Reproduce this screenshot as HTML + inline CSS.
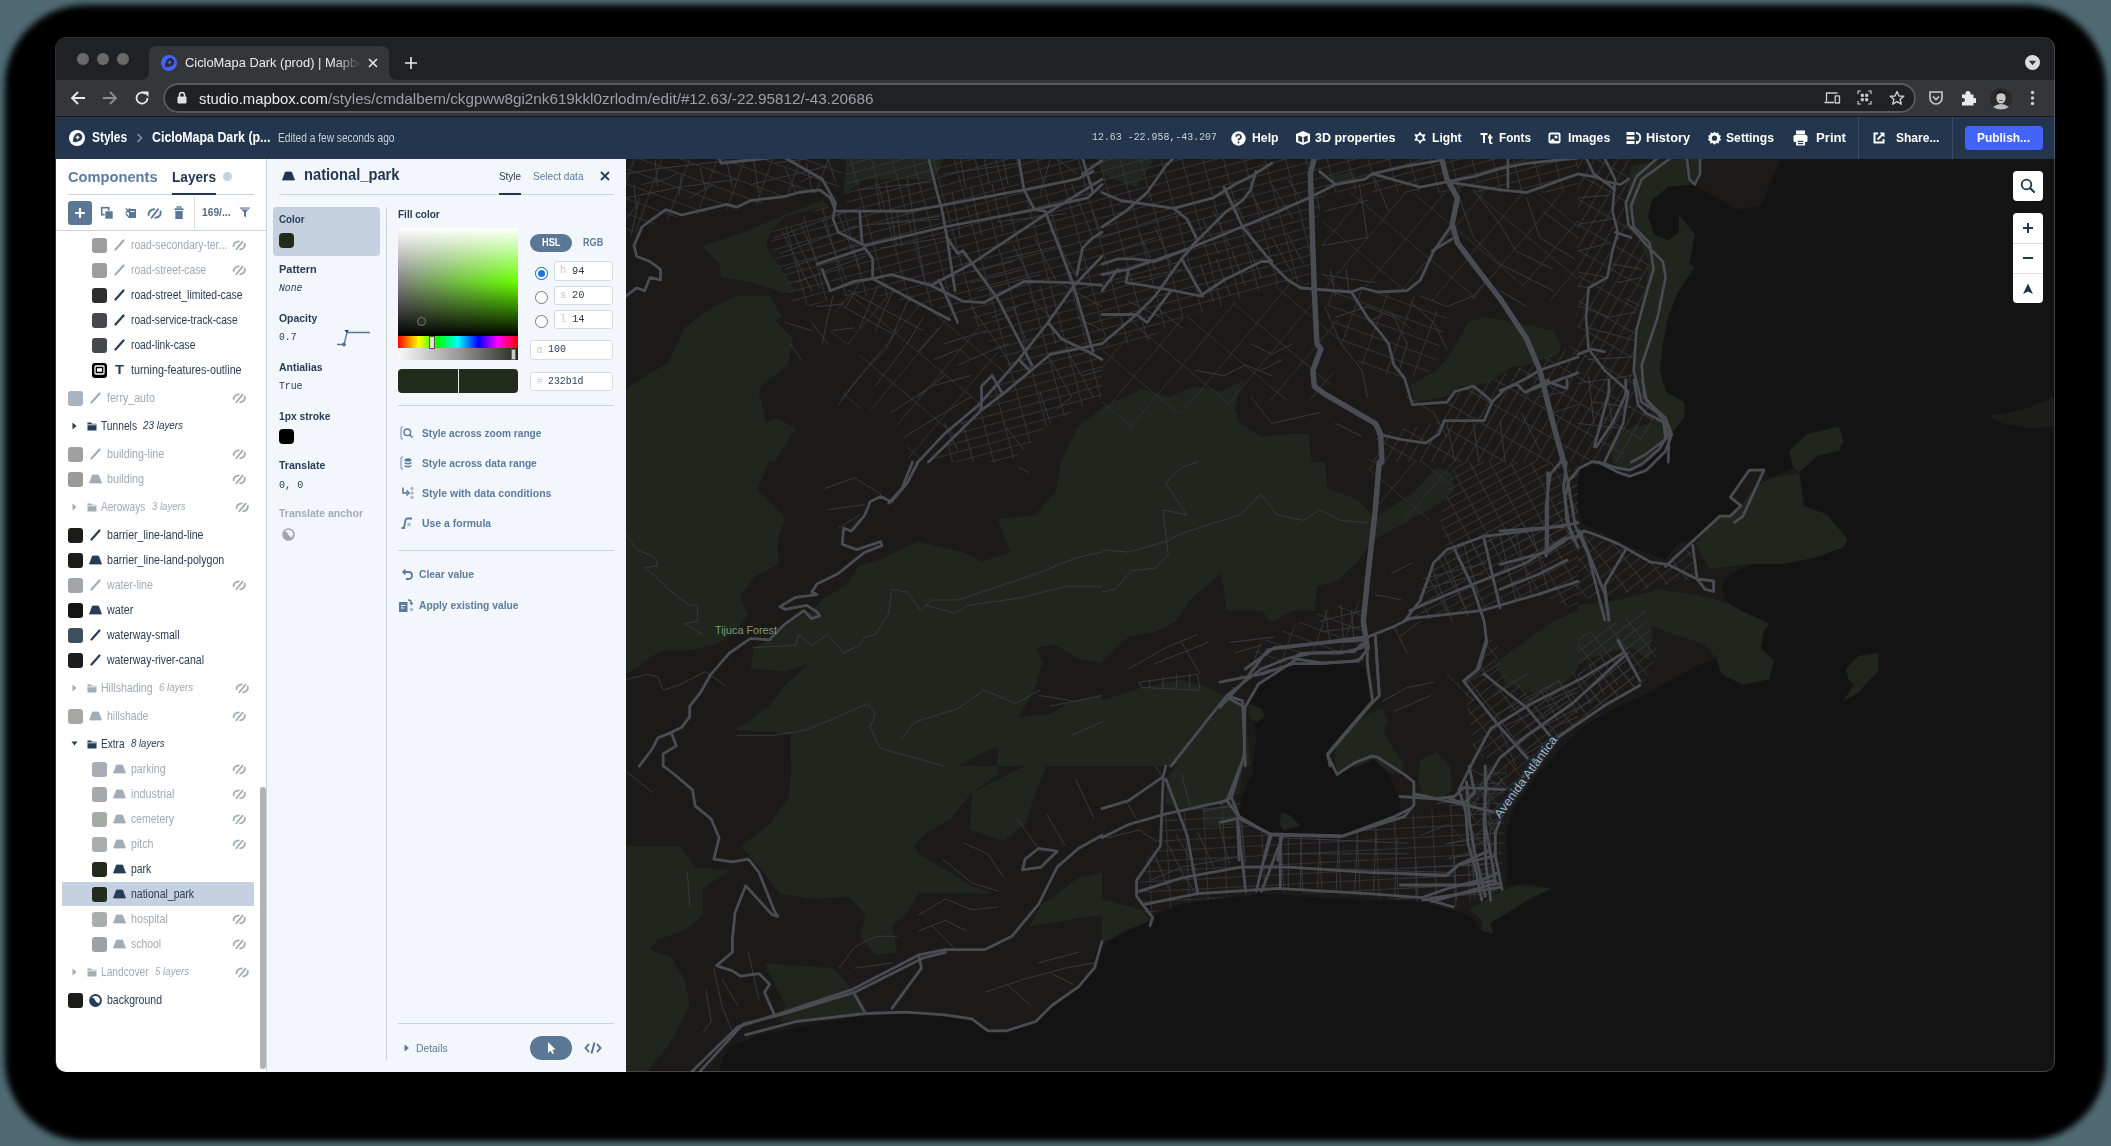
<!DOCTYPE html><html><head><meta charset="utf-8"><style>
html,body{margin:0;padding:0;width:2111px;height:1146px;overflow:hidden;background:#4f6a73;font-family:"Liberation Sans",sans-serif;}
.t{position:absolute;white-space:nowrap;transform-origin:0 50%;font-family:"Liberation Sans",sans-serif;}
.m{font-family:"Liberation Mono",monospace;}
.r{position:absolute;}
</style></head><body><div class="r" style="left:5px;top:5px;width:2101px;height:1136px;background:#000;border-radius:80px;filter:blur(3px);"></div><div class="r" style="left:13px;top:13px;width:2085px;height:1120px;background:#000;border-radius:72px;"></div><div class="r" style="left:56px;top:38px;width:1999px;height:1034px;background:#202124;border-radius:10px;"></div><svg class="r" style="left:626px;top:159px;clip-path:inset(0 round 0 0 10px 0)" width="1429" height="913" viewBox="626 159 1429 913"><defs><pattern id="pa" width="20" height="9" patternUnits="userSpaceOnUse" patternTransform="rotate(-15)"><path d="M0 0.5 H20 M0.5 0 V9" stroke="#333437" stroke-width="0.9" fill="none"/></pattern><pattern id="pb" width="18" height="8" patternUnits="userSpaceOnUse" patternTransform="rotate(-28)"><path d="M0 0.5 H18 M0.5 0 V8" stroke="#333437" stroke-width="0.9" fill="none"/></pattern><pattern id="pc" width="18" height="9" patternUnits="userSpaceOnUse" patternTransform="rotate(-38)"><path d="M0 0.5 H18 M0.5 0 V9" stroke="#333437" stroke-width="0.9" fill="none"/></pattern><pattern id="pd" width="19" height="10" patternUnits="userSpaceOnUse" patternTransform="rotate(-3)"><path d="M0 0.5 H19 M0.5 0 V10" stroke="#333437" stroke-width="0.9" fill="none"/></pattern><pattern id="pe" width="26" height="14" patternUnits="userSpaceOnUse" patternTransform="rotate(20)"><path d="M0 0.5 H26 M0.5 0 V14" stroke="#333437" stroke-width="0.9" fill="none"/></pattern><pattern id="pf" width="22" height="10" patternUnits="userSpaceOnUse" patternTransform="rotate(-60)"><path d="M0 0.5 H22 M0.5 0 V10" stroke="#333437" stroke-width="0.9" fill="none"/></pattern><pattern id="pg" width="40" height="30" patternUnits="userSpaceOnUse" patternTransform="rotate(-50)"><path d="M0 0.5 H40 M0.5 0 V30" stroke="#2e2f31" stroke-width="0.9" fill="none"/></pattern></defs><rect x="626" y="159" width="1429" height="913" fill="#1b1a18"/><polygon points="701.6,245.6 737.4,234.9 774.6,219.0 822.3,200.5 827.6,205.8 785.2,216.4 769.3,232.3 766.6,248.2 774.6,258.8 795.8,290.7 785.2,293.3 753.4,282.7 721.5,277.4 718.9,264.1" fill="#20251d"/><polygon points="626.0,388.8 668.5,362.3 684.4,327.8 713.6,306.6 737.4,296.0 769.3,296.0 782.5,317.2 774.6,319.8 793.2,338.4 787.8,365.0 764.0,383.5 758.7,391.5 766.6,423.3 777.2,418.0 795.8,428.6 774.6,462.1 626.0,462.1" fill="#20251d"/><polygon points="846.2,158.0 944.4,158.0 933.8,179.2 896.6,179.2 864.8,179.2 843.6,195.1" fill="#20251d"/><polygon points="1102.0,407.4 1077.0,428.6 1061.1,462.1 1102.0,462.1" fill="#20251d"/><polygon points="1102.0,407.4 1141.8,388.8 1168.3,396.8 1194.9,386.2 1221.4,391.5 1242.6,380.9 1234.7,407.4 1240.0,423.3 1261.2,436.6 1287.7,433.9 1309.0,433.9 1311.6,462.1 1102.0,462.1" fill="#20251d"/><polygon points="1409.8,386.2 1436.3,370.3 1452.2,351.7 1468.1,322.5 1484.1,317.2 1515.9,322.5 1553.0,330.5 1561.0,343.7 1558.4,354.3 1526.5,365.0 1510.6,367.6 1486.7,383.5 1460.2,386.2 1446.9,396.8 1415.1,402.1" fill="#20251d"/><polygon points="1102.0,158.0 1155.1,158.0 1136.5,187.2 1112.6,179.2 1102.0,173.9" fill="#20251d"/><polygon points="1330.2,176.6 1354.1,171.3 1356.7,181.9 1335.5,184.5" fill="#20251d"/><polygon points="626.0,462.0 1102.0,462.0 1102.0,766.1 626.0,766.1" fill="#20251d"/><polygon points="1102.0,462.0 1324.9,462.0 1327.5,488.5 1356.7,499.1 1375.3,517.7 1415.1,491.2 1436.3,467.3 1452.2,472.6 1454.9,491.2 1433.7,507.1 1399.2,525.7 1375.3,538.9 1356.7,562.8 1335.5,581.4 1316.9,586.7 1314.3,610.6 1293.0,610.6 1271.8,621.2 1261.2,610.6 1226.7,610.6 1221.4,573.4 1189.6,600.0 1176.3,621.2 1155.1,631.8 1128.5,637.1 1102.0,661.0" fill="#20251d"/><polygon points="1102.0,700.8 1141.8,687.5 1181.6,679.6 1208.1,687.5 1229.4,698.1 1245.3,708.7 1250.6,766.1 1102.0,766.1" fill="#20251d"/><polygon points="1494.7,663.6 1515.9,647.7 1553.0,621.2 1578.0,610.6 1578.0,669.0 1558.4,690.2 1531.8,692.8 1505.3,682.2" fill="#20251d"/><polygon points="1335.5,740.6 1367.3,716.7 1377.9,711.4 1383.2,727.3 1393.9,766.1 1335.5,766.1" fill="#20251d"/><polygon points="791.0,766.0 998.5,766.0 998.5,774.0 971.9,792.6 950.6,819.2 926.7,832.5 913.4,845.8 918.7,853.8 945.3,869.8 971.9,885.7 993.2,893.7 958.6,893.7 918.7,893.7 905.4,915.0 892.1,925.7 897.4,952.3 876.1,954.9 860.2,936.3 865.5,915.0 849.5,896.4 812.3,899.0 780.3,893.7 759.0,867.1 740.4,845.8 769.7,824.5 780.3,808.6 788.3,797.9" fill="#20251d"/><polygon points="971.9,792.6 1025.1,766.0 1046.4,766.0 1035.8,792.6 1025.1,824.5 1003.9,840.5 969.3,829.9 971.9,797.9" fill="#20251d"/><polygon points="626.0,845.8 679.2,845.8 695.2,867.1 729.8,869.8 703.2,888.4 703.2,915.0 684.5,931.0 657.9,939.0 649.9,949.6 671.2,957.6 684.5,978.9 689.9,1005.5 668.6,1045.4 647.3,1070.9 626.0,1070.9" fill="#20251d"/><polygon points="764.4,962.9 833.6,968.2 865.5,1005.5 860.2,1013.5 780.3,1021.5 785.7,1005.5 775.0,984.2" fill="#20251d"/><polygon points="1030.5,925.7 1102.1,915.0 1102.1,872.4 1078.4,877.8 1057.1,893.7 1041.1,904.4" fill="#20251d"/><polygon points="769.3,462.0 1061.1,462.0 1055.8,491.2 1034.6,515.1 997.5,519.0 1010.7,552.2 981.5,561.5 963.0,552.2 917.9,541.6 878.1,560.2 859.5,565.5 846.2,584.0 822.3,600.0 811.7,610.6 790.5,621.2 774.6,637.1 753.4,647.7 750.7,669.0 785.2,671.6 809.1,663.6 785.2,684.9 769.3,706.1 742.7,724.7 732.1,730.0 774.6,732.6 790.5,735.3 790.5,766.1 626.0,766.1 626.0,674.3 649.9,658.3 660.5,650.4 687.0,650.4 713.6,645.1 732.1,634.5 748.0,615.9 740.1,594.7 756.0,576.1 778.6,564.1 777.2,541.6 785.2,517.7 757.3,489.9" fill="#1b1a18"/><polygon points="1037.2,647.7 1055.8,645.1 1077.0,658.3 1102.0,663.6 1102.0,695.5 1071.7,700.8 1050.5,714.1 1018.7,716.7 1034.6,690.2 1042.6,663.6" fill="#1b1a18"/><polygon points="957.7,766.1 997.5,745.9 997.5,766.1" fill="#1b1a18"/><polygon points="626.0,766.0 791.0,766.0 788.3,797.9 780.3,808.6 769.7,824.5 740.4,845.8 729.8,869.8 695.2,867.1 679.2,845.8 626.0,845.8" fill="#1b1a18"/><polygon points="1631.1,166.0 1657.6,160.7 1700.0,158.0 1702.7,173.9 1692.1,184.5 1668.2,187.2 1652.3,200.5 1648.3,216.4 1654.9,234.9 1668.2,240.2 1678.8,232.3 1678.8,213.7 1694.7,234.9 1689.4,264.1 1694.7,266.8 1678.8,290.7 1668.2,317.2 1662.9,343.7 1660.2,370.3 1665.6,391.5 1684.1,402.1 1684.1,423.3 1668.2,462.1 1617.8,462.1 1657.6,423.3 1641.7,396.8 1633.7,370.3 1639.0,317.2 1649.6,264.1 1639.0,237.6 1625.8,211.1 1628.4,184.5" fill="#20251d"/><polygon points="1608.9,442.8 1634.0,426.1 1663.4,421.9 1665.4,438.6 1646.6,459.6 1625.7,470.1 1613.1,463.8" fill="#20251d"/><polygon points="1694.8,543.4 1719.9,516.1 1740.8,505.7 1757.6,484.7 1770.2,478.4 1799.5,472.1 1803.7,505.7 1826.7,514.0 1847.6,539.2 1843.5,547.5 1814.1,558.0 1782.7,564.3 1751.3,564.3 1709.4,568.5" fill="#20251d"/><polygon points="1789.0,451.2 1805.8,434.5 1839.3,426.1 1843.5,440.7 1839.3,451.2 1818.3,455.4 1799.5,472.1 1793.2,468.0" fill="#20251d"/><polygon points="1617.8,600 1657.6,589.4 1697.4,594.7 1737.2,605.3 1763.7,613.2 1769,623.8 1763.7,631.8 1761,647.7 1774.3,661 1769,679.6 1742.5,684.9 1721.3,674.3 1716,658.3 1705.4,645 1652.3,626.5 1649.6,661 1631,647.7 1604.5,653 1578,663.6 1578,605.3" fill="#20251d"/><polygon points="1846,669 1859,655.7 1878,653 1878,671.6 1864.6,685 1859,693 1843,700.8 1854,685 1848.6,679.6" fill="#20251d"/><polygon points="1989.2,415.4 2007.8,412.7 2029.0,407.4 2054.0,396.8 2054.0,426.0 2029.0,428.6 2002.5,423.3" fill="#20251d"/><polygon points="1469.2,909.7 1501.1,891.1 1517.1,885.7 1551.7,888.4 1527.8,899.0 1506.5,915.0 1493.2,933.6 1479.9,936.3 1482.5,920.3" fill="#20251d"/><polygon points="1102.0,899.0 1141.9,909.7 1155.2,925.7 1133.9,933.6 1102.0,941.6" fill="#20251d"/><polygon points="1220.0,697.6 1243.0,709.1 1245.0,755.2 1239.2,793.6 1227.7,799.3 1220.0,799.3" fill="#20251d"/><polygon points="1335.2,734.1 1369.7,713.0 1383.2,709.1 1387.0,720.6 1383.2,732.1 1392.8,747.5 1404.3,764.8 1400.5,774.4 1388.9,772.5 1373.6,759.0 1354.4,762.9 1337.1,772.5" fill="#20251d"/><polygon points="1203.1,808.6 1235.0,803.3 1237.7,824.5 1205.8,827.2" fill="#20251d"/><polygon points="1420,760 1436,752 1450,765 1452,790 1440,800 1424,798 1418,780" fill="#20251d"/><polygon points="1166,778.7 1227,698.4 1244.5,708.9 1242.7,757.7 1228.8,799.6 1204.3,804.9 1178,808.3 1166,803" fill="#20251d"/><polygon points="626.0,158.0 846.2,158.0 838.3,189.8 785.2,197.8 737.4,208.4 679.1,216.4 641.9,227.0 626.0,237.6" fill="url(#pe)"/><polygon points="769.3,232.3 825.0,205.8 846.2,211.1 917.9,205.8 1102.0,171.3 1102.0,396.8 1050.5,423.3 1010.7,462.1 931.1,462.1 970.9,410.1 1010.7,370.3 970.9,317.2 931.1,306.6 878.1,296.0 838.3,296.0 811.7,306.6 790.5,301.3 785.2,277.4 774.6,258.8" fill="url(#pa)"/><polygon points="838.3,296.0 878.1,296.0 931.1,306.6 970.9,317.2 1010.7,370.3 970.9,410.1 931.1,462.1 912.5,462.1 891.3,412.7 838.3,404.7 864.8,343.7 827.6,343.7" fill="url(#pg)"/><polygon points="846.2,158.0 1102.0,158.0 1102.0,171.3 917.9,205.8 846.2,211.1" fill="url(#pa)"/><polygon points="1102.0,158.0 1322.2,158.0 1322.2,192.5 1309.0,285.4 1287.7,280.0 1221.4,306.6 1181.6,317.2 1141.8,343.7 1102.0,349.0" fill="url(#pa)"/><polygon points="1322.2,158.0 1578.0,158.0 1578.0,192.5 1322.2,192.5" fill="url(#pa)"/><polygon points="1322.2,192.5 1578.0,192.5 1578.0,317.2 1526.5,285.4 1486.7,296.0 1446.9,306.6 1407.1,290.7 1322.2,290.7" fill="url(#pg)"/><polygon points="1322.2,290.7 1407.1,290.7 1446.9,317.2 1433.7,370.3 1404.5,378.2 1367.3,370.3 1340.8,343.7" fill="url(#pe)"/><polygon points="1446.9,396.8 1578.0,343.7 1578.0,462.1 1367.3,462.1 1377.9,433.9 1441.6,420.7" fill="url(#pf)"/><polygon points="1578.0,158.0 1631.1,158.0 1625.8,211.1 1639.0,237.6 1649.6,264.1 1639.0,317.2 1633.7,370.3 1641.7,396.8 1657.6,423.3 1617.8,462.1 1578.0,462.1" fill="url(#pf)"/><polygon points="1407.1,621.2 1433.7,562.8 1454.9,541.6 1553.0,515.1 1578.0,462.0 1578.0,610.6 1537.1,594.7 1486.7,610.6 1433.7,618.5" fill="url(#pb)"/><polygon points="1226.7,695.5 1261.2,642.4 1322.2,610.6 1362.0,600.0 1367.3,647.7 1314.3,653.0 1261.2,671.6" fill="url(#pe)"/><polygon points="1136.6,885.7 1165.9,813.9 1227.1,800.6 1240.4,819.2 1272.3,835.2 1341.5,836.5 1394.7,816.6 1447.9,805.9 1487.8,766.0 1506.5,766.0 1501.1,891.1 1453.3,907.0 1368.1,896.4 1261.7,891.1 1181.8,904.4 1144.6,915.0" fill="url(#pd)"/><polygon points="1640.0,685.4 1626.9,653.6 1572.4,703.5 1527.0,735.3 1499.8,758.0 1486.2,780.7 1459.0,789.7 1465.8,812.4 1468.1,844.2 1474.9,866.9 1481.7,900.0 1502.1,889.5 1495.3,855.5 1495.3,832.8 1506.6,803.3 1527.0,771.6 1554.3,739.8 1604.2,705.8" fill="url(#pc)"/><polygon points="1626.9,653.6 1572.4,703.5 1527.0,735.3 1499.8,758.0 1474.9,758.0 1463.5,680.8 1477.1,669.5 1486.2,640.0 1497.5,640.0 1497.5,667.2 1527.0,692.2 1588.3,687.6 1617.8,649.1" fill="url(#pc)"/><polygon points="1400.0,866.9 1459.0,864.6 1495.3,855.5 1499.8,889.5 1422.7,900.0 1400.0,900.0" fill="url(#pd)"/><polygon points="1578.0,637.1 1644.3,610.6 1657.6,653.0 1644.3,682.2 1578.0,716.7" fill="url(#pc)"/><polygon points="1455,462 1566,462 1578,480 1578,540 1450,560 1440,520" fill="url(#pb)"/><polygon points="1367,462 1455,462 1440,520 1380,520" fill="url(#pg)"/><polygon points="1102,342 1180,318 1221,307 1288,282 1318,290 1340,320 1330,400 1250,400 1150,420 1102,440" fill="url(#pg)"/><polygon points="1577.5,526.6 1583.8,530.8 1617.3,543.4 1650.8,562.2 1667.5,564.3 1692.7,545.4 1696.9,576.9 1646.6,589.4 1577.5,599.9" fill="url(#pc)"/><polygon points="1782,158 1774,174 1761,206 1737,209.7 1705,191 1692,184.5 1668,187 1652,200 1648,216 1655,235 1668,240 1679,232 1679,214 1695,235 1689,264 1695,267 1679,291 1668,317 1663,344 1660,370 1666,391.5 1684,402 1686,407 1684,418 1674,430 1663,447 1642,468 1626,476 1609,468 1590,464 1580,470 1577.5,485 1578.5,510 1580,516 1584,524.5 1600.5,531 1625.7,545.4 1650.8,553.8 1665.4,560 1678,543 1692.7,539 1720,514 1730,516 1740.8,505.7 1730,497 1749,470 1764,470 1770,478 1793,468 1789,451 1805.8,434.5 1839,426 1843.5,440.7 1839,451 1818,455.4 1799.5,472 1803.7,505.7 1826.7,514 1847.6,539 1843.5,547.5 1814,558 1782.7,564.3 1751,564.3 1730,574.8 1722,585 1726,602 1741,610.4 1762,620 1769,623.8 1763.7,631.8 1761,647.7 1774.3,661 1769,679.6 1742.5,684.9 1721.3,674.3 1716,658.3 1697,666 1650,692 1612,710 1585,725 1562,748 1535,778 1514,808 1506,832 1508,872 1506.5,885.7 1527.7,883 1551.7,888.4 1517,907 1490.4,923 1493,933.6 1482.5,931 1469,915 1421.3,901.7 1341.5,899 1261.7,893.7 1182,904 1155,915 1154.8,918.6 1120.6,933.3 1106,943 1095,952.9 1098.6,967.5 1086.4,977.3 1076.7,987 1058.3,1000 1052,1005.5 1038.5,1021.5 1006.5,1032 988,1032 972,1021.5 918.7,1013.5 865.5,1016 812,1024 759,1035 727,1048 719,1071 2055,1071 2055,158" fill="#131313"/><polygon points="1989.2,415.4 2007.8,412.7 2029.0,407.4 2054.0,396.8 2054.0,426.0 2029.0,428.6 2002.5,423.3" fill="#1c1d1a"/><polygon points="1846,669 1859,655.7 1878,653 1878,671.6 1864.6,685 1859,693 1843,700.8 1854,685 1848.6,679.6" fill="#20251d"/><polygon points="1248.8,703.4 1258.4,684.2 1273.8,670.7 1300.6,661.1 1321.7,664 1354.4,662.1 1364,666.9 1367.8,686.1 1369.7,701.4 1358.2,716.8 1327.5,753.3 1335.2,774.4 1354.4,768.6 1373.6,759 1389,774.4 1400.5,801.3 1398.5,812.8 1373.6,822.4 1342.9,833.9 1269.9,832 1252.6,824.3 1239.2,812.8 1241.1,797.4 1252.6,774.4 1256.5,736 1252.6,716.8" fill="#131313"/><polygon points="1248.8,703.4 1262.2,709.1 1264.2,716.8 1256.5,722.5 1248.8,716.8" fill="#20251d"/><polygon points="1281.4,812.8 1289.1,814.7 1300.6,826.2 1283.4,830.1 1279.5,824.3" fill="#20251d"/><polyline points="626.0,173.9 657.8,168.6 705.6,163.3 758.7,158.0" fill="none" stroke="#38393d" stroke-width="1.0" vector-effect="non-scaling-stroke" stroke-linejoin="round" stroke-linecap="round"/><polyline points="626.0,197.8 679.1,187.2 737.4,179.2" fill="none" stroke="#38393d" stroke-width="1.0" vector-effect="non-scaling-stroke" stroke-linejoin="round" stroke-linecap="round"/><polyline points="679.1,195.1 681.7,173.9" fill="none" stroke="#38393d" stroke-width="1.0" vector-effect="non-scaling-stroke" stroke-linejoin="round" stroke-linecap="round"/><polyline points="705.6,189.8 700.3,168.6" fill="none" stroke="#38393d" stroke-width="1.0" vector-effect="non-scaling-stroke" stroke-linejoin="round" stroke-linecap="round"/><polyline points="732.1,187.2 726.8,160.7" fill="none" stroke="#38393d" stroke-width="1.0" vector-effect="non-scaling-stroke" stroke-linejoin="round" stroke-linecap="round"/><polyline points="657.8,187.2 655.2,160.7" fill="none" stroke="#38393d" stroke-width="1.0" vector-effect="non-scaling-stroke" stroke-linejoin="round" stroke-linecap="round"/><polyline points="636.6,211.1 634.0,184.5" fill="none" stroke="#38393d" stroke-width="1.0" vector-effect="non-scaling-stroke" stroke-linejoin="round" stroke-linecap="round"/><polyline points="631.3,234.9 639.3,197.8" fill="none" stroke="#38393d" stroke-width="1.0" vector-effect="non-scaling-stroke" stroke-linejoin="round" stroke-linecap="round"/><polyline points="689.7,197.8 713.6,184.5" fill="none" stroke="#38393d" stroke-width="1.0" vector-effect="non-scaling-stroke" stroke-linejoin="round" stroke-linecap="round"/><polyline points="641.9,184.5 665.8,179.2 676.4,173.9" fill="none" stroke="#38393d" stroke-width="1.0" vector-effect="non-scaling-stroke" stroke-linejoin="round" stroke-linecap="round"/><polyline points="626.0,219.0 636.6,205.8" fill="none" stroke="#38393d" stroke-width="1.0" vector-effect="non-scaling-stroke" stroke-linejoin="round" stroke-linecap="round"/><polyline points="750.7,184.5 795.8,173.9 827.6,166.0" fill="none" stroke="#38393d" stroke-width="1.0" vector-effect="non-scaling-stroke" stroke-linejoin="round" stroke-linecap="round"/><polyline points="758.7,192.5 753.4,158.0" fill="none" stroke="#38393d" stroke-width="1.0" vector-effect="non-scaling-stroke" stroke-linejoin="round" stroke-linecap="round"/><polyline points="795.8,192.5 785.2,168.6" fill="none" stroke="#38393d" stroke-width="1.0" vector-effect="non-scaling-stroke" stroke-linejoin="round" stroke-linecap="round"/><polyline points="811.7,189.8 806.4,163.3" fill="none" stroke="#38393d" stroke-width="1.0" vector-effect="non-scaling-stroke" stroke-linejoin="round" stroke-linecap="round"/><polyline points="835.6,181.9 827.6,158.0" fill="none" stroke="#38393d" stroke-width="1.0" vector-effect="non-scaling-stroke" stroke-linejoin="round" stroke-linecap="round"/><polyline points="774.6,163.3 811.7,158.0" fill="none" stroke="#38393d" stroke-width="1.0" vector-effect="non-scaling-stroke" stroke-linejoin="round" stroke-linecap="round"/><polyline points="801.1,181.9 817.0,173.9" fill="none" stroke="#38393d" stroke-width="1.0" vector-effect="non-scaling-stroke" stroke-linejoin="round" stroke-linecap="round"/><polyline points="774.6,237.6 848.9,211.1" fill="none" stroke="#38393d" stroke-width="1.0" vector-effect="non-scaling-stroke" stroke-linejoin="round" stroke-linecap="round"/><polyline points="779.9,253.5 854.2,227.0" fill="none" stroke="#38393d" stroke-width="1.0" vector-effect="non-scaling-stroke" stroke-linejoin="round" stroke-linecap="round"/><polyline points="785.2,269.4 859.5,242.9" fill="none" stroke="#38393d" stroke-width="1.0" vector-effect="non-scaling-stroke" stroke-linejoin="round" stroke-linecap="round"/><polyline points="795.8,282.7 864.8,256.2" fill="none" stroke="#38393d" stroke-width="1.0" vector-effect="non-scaling-stroke" stroke-linejoin="round" stroke-linecap="round"/><polyline points="782.5,232.3 811.7,290.7" fill="none" stroke="#38393d" stroke-width="1.0" vector-effect="non-scaling-stroke" stroke-linejoin="round" stroke-linecap="round"/><polyline points="801.1,224.3 827.6,285.4" fill="none" stroke="#38393d" stroke-width="1.0" vector-effect="non-scaling-stroke" stroke-linejoin="round" stroke-linecap="round"/><polyline points="822.3,219.0 846.2,280.0" fill="none" stroke="#38393d" stroke-width="1.0" vector-effect="non-scaling-stroke" stroke-linejoin="round" stroke-linecap="round"/><polyline points="838.3,213.7 859.5,269.4" fill="none" stroke="#38393d" stroke-width="1.0" vector-effect="non-scaling-stroke" stroke-linejoin="round" stroke-linecap="round"/><polyline points="790.5,227.0 819.7,288.0" fill="none" stroke="#38393d" stroke-width="1.0" vector-effect="non-scaling-stroke" stroke-linejoin="round" stroke-linecap="round"/><polyline points="859.5,189.8 931.1,181.9" fill="none" stroke="#38393d" stroke-width="1.0" vector-effect="non-scaling-stroke" stroke-linejoin="round" stroke-linecap="round"/><polyline points="878.1,224.3 939.1,219.0" fill="none" stroke="#38393d" stroke-width="1.0" vector-effect="non-scaling-stroke" stroke-linejoin="round" stroke-linecap="round"/><polyline points="880.7,248.2 944.4,237.6" fill="none" stroke="#38393d" stroke-width="1.0" vector-effect="non-scaling-stroke" stroke-linejoin="round" stroke-linecap="round"/><polyline points="886.0,181.9 896.6,245.6" fill="none" stroke="#38393d" stroke-width="1.0" vector-effect="non-scaling-stroke" stroke-linejoin="round" stroke-linecap="round"/><polyline points="907.2,179.2 917.9,245.6" fill="none" stroke="#38393d" stroke-width="1.0" vector-effect="non-scaling-stroke" stroke-linejoin="round" stroke-linecap="round"/><polyline points="917.9,245.6 925.8,285.4" fill="none" stroke="#38393d" stroke-width="1.0" vector-effect="non-scaling-stroke" stroke-linejoin="round" stroke-linecap="round"/><polyline points="851.5,227.0 939.1,216.4" fill="none" stroke="#38393d" stroke-width="1.0" vector-effect="non-scaling-stroke" stroke-linejoin="round" stroke-linecap="round"/><polyline points="875.4,181.9 880.7,211.1" fill="none" stroke="#38393d" stroke-width="1.0" vector-effect="non-scaling-stroke" stroke-linejoin="round" stroke-linecap="round"/><polyline points="896.6,211.1 901.9,245.6" fill="none" stroke="#38393d" stroke-width="1.0" vector-effect="non-scaling-stroke" stroke-linejoin="round" stroke-linecap="round"/><polyline points="952.3,192.5 960.3,237.6" fill="none" stroke="#38393d" stroke-width="1.0" vector-effect="non-scaling-stroke" stroke-linejoin="round" stroke-linecap="round"/><polyline points="970.9,187.2 981.5,234.9" fill="none" stroke="#38393d" stroke-width="1.0" vector-effect="non-scaling-stroke" stroke-linejoin="round" stroke-linecap="round"/><polyline points="992.1,184.5 1002.8,232.3" fill="none" stroke="#38393d" stroke-width="1.0" vector-effect="non-scaling-stroke" stroke-linejoin="round" stroke-linecap="round"/><polyline points="957.7,224.3 1024.0,211.1" fill="none" stroke="#38393d" stroke-width="1.0" vector-effect="non-scaling-stroke" stroke-linejoin="round" stroke-linecap="round"/><polyline points="944.4,173.9 1018.7,163.3" fill="none" stroke="#38393d" stroke-width="1.0" vector-effect="non-scaling-stroke" stroke-linejoin="round" stroke-linecap="round"/><polyline points="960.3,158.0 965.6,187.2" fill="none" stroke="#38393d" stroke-width="1.0" vector-effect="non-scaling-stroke" stroke-linejoin="round" stroke-linecap="round"/><polyline points="984.2,158.0 989.5,184.5" fill="none" stroke="#38393d" stroke-width="1.0" vector-effect="non-scaling-stroke" stroke-linejoin="round" stroke-linecap="round"/><polyline points="1002.8,158.0 1008.1,184.5" fill="none" stroke="#38393d" stroke-width="1.0" vector-effect="non-scaling-stroke" stroke-linejoin="round" stroke-linecap="round"/><polyline points="1039.9,195.1 1050.5,158.0" fill="none" stroke="#38393d" stroke-width="1.0" vector-effect="non-scaling-stroke" stroke-linejoin="round" stroke-linecap="round"/><polyline points="1055.8,158.0 1077.0,173.9" fill="none" stroke="#38393d" stroke-width="1.0" vector-effect="non-scaling-stroke" stroke-linejoin="round" stroke-linecap="round"/><polyline points="970.9,282.7 1024.0,269.4" fill="none" stroke="#38393d" stroke-width="1.0" vector-effect="non-scaling-stroke" stroke-linejoin="round" stroke-linecap="round"/><polyline points="978.9,290.7 1039.9,274.7" fill="none" stroke="#38393d" stroke-width="1.0" vector-effect="non-scaling-stroke" stroke-linejoin="round" stroke-linecap="round"/><polyline points="1002.8,258.8 1061.1,245.6" fill="none" stroke="#38393d" stroke-width="1.0" vector-effect="non-scaling-stroke" stroke-linejoin="round" stroke-linecap="round"/><polyline points="1050.5,229.6 1077.0,277.4" fill="none" stroke="#38393d" stroke-width="1.0" vector-effect="non-scaling-stroke" stroke-linejoin="round" stroke-linecap="round"/><polyline points="1034.6,237.6 1055.8,280.0" fill="none" stroke="#38393d" stroke-width="1.0" vector-effect="non-scaling-stroke" stroke-linejoin="round" stroke-linecap="round"/><polyline points="1013.4,245.6 1031.9,282.7" fill="none" stroke="#38393d" stroke-width="1.0" vector-effect="non-scaling-stroke" stroke-linejoin="round" stroke-linecap="round"/><polyline points="997.5,221.7 1066.4,213.7" fill="none" stroke="#38393d" stroke-width="1.0" vector-effect="non-scaling-stroke" stroke-linejoin="round" stroke-linecap="round"/><polyline points="970.9,272.1 1013.4,261.5" fill="none" stroke="#38393d" stroke-width="1.0" vector-effect="non-scaling-stroke" stroke-linejoin="round" stroke-linecap="round"/><polyline points="848.9,290.7 923.2,330.5" fill="none" stroke="#38393d" stroke-width="1.0" vector-effect="non-scaling-stroke" stroke-linejoin="round" stroke-linecap="round"/><polyline points="843.6,306.6 891.3,333.1" fill="none" stroke="#38393d" stroke-width="1.0" vector-effect="non-scaling-stroke" stroke-linejoin="round" stroke-linecap="round"/><polyline points="878.1,285.4 859.5,327.8" fill="none" stroke="#38393d" stroke-width="1.0" vector-effect="non-scaling-stroke" stroke-linejoin="round" stroke-linecap="round"/><polyline points="894.0,288.0 875.4,330.5" fill="none" stroke="#38393d" stroke-width="1.0" vector-effect="non-scaling-stroke" stroke-linejoin="round" stroke-linecap="round"/><polyline points="909.9,296.0 891.3,338.4" fill="none" stroke="#38393d" stroke-width="1.0" vector-effect="non-scaling-stroke" stroke-linejoin="round" stroke-linecap="round"/><polyline points="896.6,327.8 886.0,349.0 864.8,370.3 838.3,404.7" fill="none" stroke="#38393d" stroke-width="1.0" vector-effect="non-scaling-stroke" stroke-linejoin="round" stroke-linecap="round"/><polyline points="923.2,317.2 907.2,343.7 875.4,386.2" fill="none" stroke="#38393d" stroke-width="1.0" vector-effect="non-scaling-stroke" stroke-linejoin="round" stroke-linecap="round"/><polyline points="939.1,327.8 917.9,351.7" fill="none" stroke="#38393d" stroke-width="1.0" vector-effect="non-scaling-stroke" stroke-linejoin="round" stroke-linecap="round"/><polyline points="859.5,282.7 846.2,306.6" fill="none" stroke="#38393d" stroke-width="1.0" vector-effect="non-scaling-stroke" stroke-linejoin="round" stroke-linecap="round"/><polyline points="833.0,296.0 827.6,317.2 822.3,343.7" fill="none" stroke="#38393d" stroke-width="1.0" vector-effect="non-scaling-stroke" stroke-linejoin="round" stroke-linecap="round"/><polyline points="970.9,306.6 997.5,343.7 1010.7,365.0" fill="none" stroke="#38393d" stroke-width="1.0" vector-effect="non-scaling-stroke" stroke-linejoin="round" stroke-linecap="round"/><polyline points="944.4,343.7 986.8,330.5" fill="none" stroke="#38393d" stroke-width="1.0" vector-effect="non-scaling-stroke" stroke-linejoin="round" stroke-linecap="round"/><polyline points="957.7,365.0 1008.1,343.7" fill="none" stroke="#38393d" stroke-width="1.0" vector-effect="non-scaling-stroke" stroke-linejoin="round" stroke-linecap="round"/><polyline points="1013.4,306.6 1029.3,349.0" fill="none" stroke="#38393d" stroke-width="1.0" vector-effect="non-scaling-stroke" stroke-linejoin="round" stroke-linecap="round"/><polyline points="1039.9,285.4 1055.8,343.7" fill="none" stroke="#38393d" stroke-width="1.0" vector-effect="non-scaling-stroke" stroke-linejoin="round" stroke-linecap="round"/><polyline points="1050.5,359.6 1071.7,396.8 1055.8,410.1" fill="none" stroke="#38393d" stroke-width="1.0" vector-effect="non-scaling-stroke" stroke-linejoin="round" stroke-linecap="round"/><polyline points="1066.4,349.0 1093.0,396.8" fill="none" stroke="#38393d" stroke-width="1.0" vector-effect="non-scaling-stroke" stroke-linejoin="round" stroke-linecap="round"/><polyline points="1029.3,296.0 1050.5,317.2" fill="none" stroke="#38393d" stroke-width="1.0" vector-effect="non-scaling-stroke" stroke-linejoin="round" stroke-linecap="round"/><polyline points="992.1,317.2 1018.7,306.6" fill="none" stroke="#38393d" stroke-width="1.0" vector-effect="non-scaling-stroke" stroke-linejoin="round" stroke-linecap="round"/><polyline points="891.3,412.7 931.1,386.2 970.9,375.6" fill="none" stroke="#38393d" stroke-width="1.0" vector-effect="non-scaling-stroke" stroke-linejoin="round" stroke-linecap="round"/><polyline points="904.6,436.6 944.4,412.7 970.9,396.8" fill="none" stroke="#38393d" stroke-width="1.0" vector-effect="non-scaling-stroke" stroke-linejoin="round" stroke-linecap="round"/><polyline points="1002.8,423.3 1024.0,449.9" fill="none" stroke="#38393d" stroke-width="1.0" vector-effect="non-scaling-stroke" stroke-linejoin="round" stroke-linecap="round"/><polyline points="1039.9,391.5 1050.5,423.3" fill="none" stroke="#38393d" stroke-width="1.0" vector-effect="non-scaling-stroke" stroke-linejoin="round" stroke-linecap="round"/><polyline points="933.8,359.6 960.3,349.0 970.9,359.6" fill="none" stroke="#38393d" stroke-width="1.0" vector-effect="non-scaling-stroke" stroke-linejoin="round" stroke-linecap="round"/><polyline points="917.9,396.8 944.4,375.6" fill="none" stroke="#38393d" stroke-width="1.0" vector-effect="non-scaling-stroke" stroke-linejoin="round" stroke-linecap="round"/><polyline points="944.4,423.3 957.7,449.9" fill="none" stroke="#38393d" stroke-width="1.0" vector-effect="non-scaling-stroke" stroke-linejoin="round" stroke-linecap="round"/><polyline points="817.0,306.6 843.6,303.9" fill="none" stroke="#38393d" stroke-width="1.0" vector-effect="non-scaling-stroke" stroke-linejoin="round" stroke-linecap="round"/><polyline points="811.7,322.5 827.6,343.7" fill="none" stroke="#38393d" stroke-width="1.0" vector-effect="non-scaling-stroke" stroke-linejoin="round" stroke-linecap="round"/><polyline points="833.0,330.5 854.2,327.8" fill="none" stroke="#38393d" stroke-width="1.0" vector-effect="non-scaling-stroke" stroke-linejoin="round" stroke-linecap="round"/><polyline points="785.2,322.5 811.7,330.5" fill="none" stroke="#38393d" stroke-width="1.0" vector-effect="non-scaling-stroke" stroke-linejoin="round" stroke-linecap="round"/><polyline points="790.5,343.7 801.1,359.6" fill="none" stroke="#38393d" stroke-width="1.0" vector-effect="non-scaling-stroke" stroke-linejoin="round" stroke-linecap="round"/><polyline points="1071.7,184.5 1093.0,237.6" fill="none" stroke="#38393d" stroke-width="1.0" vector-effect="non-scaling-stroke" stroke-linejoin="round" stroke-linecap="round"/><polyline points="1093.0,211.1 1102.0,237.6" fill="none" stroke="#38393d" stroke-width="1.0" vector-effect="non-scaling-stroke" stroke-linejoin="round" stroke-linecap="round"/><polyline points="1063.8,285.4 1102.0,306.6" fill="none" stroke="#38393d" stroke-width="1.0" vector-effect="non-scaling-stroke" stroke-linejoin="round" stroke-linecap="round"/><polyline points="1077.0,317.2 1102.0,330.5" fill="none" stroke="#38393d" stroke-width="1.0" vector-effect="non-scaling-stroke" stroke-linejoin="round" stroke-linecap="round"/><polyline points="1082.4,375.6 1102.0,370.3" fill="none" stroke="#38393d" stroke-width="1.0" vector-effect="non-scaling-stroke" stroke-linejoin="round" stroke-linecap="round"/><polyline points="1102.0,237.6 1141.8,224.3 1181.6,211.1" fill="none" stroke="#38393d" stroke-width="1.0" vector-effect="non-scaling-stroke" stroke-linejoin="round" stroke-linecap="round"/><polyline points="1107.3,253.5 1155.1,237.6" fill="none" stroke="#38393d" stroke-width="1.0" vector-effect="non-scaling-stroke" stroke-linejoin="round" stroke-linecap="round"/><polyline points="1115.3,282.7 1181.6,269.4" fill="none" stroke="#38393d" stroke-width="1.0" vector-effect="non-scaling-stroke" stroke-linejoin="round" stroke-linecap="round"/><polyline points="1128.5,301.3 1160.4,317.2" fill="none" stroke="#38393d" stroke-width="1.0" vector-effect="non-scaling-stroke" stroke-linejoin="round" stroke-linecap="round"/><polyline points="1139.1,232.3 1155.1,269.4" fill="none" stroke="#38393d" stroke-width="1.0" vector-effect="non-scaling-stroke" stroke-linejoin="round" stroke-linecap="round"/><polyline points="1155.1,227.0 1171.0,264.1" fill="none" stroke="#38393d" stroke-width="1.0" vector-effect="non-scaling-stroke" stroke-linejoin="round" stroke-linecap="round"/><polyline points="1202.8,219.0 1218.7,253.5" fill="none" stroke="#38393d" stroke-width="1.0" vector-effect="non-scaling-stroke" stroke-linejoin="round" stroke-linecap="round"/><polyline points="1213.4,211.1 1229.4,245.6" fill="none" stroke="#38393d" stroke-width="1.0" vector-effect="non-scaling-stroke" stroke-linejoin="round" stroke-linecap="round"/><polyline points="1234.7,200.5 1250.6,234.9" fill="none" stroke="#38393d" stroke-width="1.0" vector-effect="non-scaling-stroke" stroke-linejoin="round" stroke-linecap="round"/><polyline points="1250.6,192.5 1271.8,229.6" fill="none" stroke="#38393d" stroke-width="1.0" vector-effect="non-scaling-stroke" stroke-linejoin="round" stroke-linecap="round"/><polyline points="1271.8,184.5 1293.0,219.0" fill="none" stroke="#38393d" stroke-width="1.0" vector-effect="non-scaling-stroke" stroke-linejoin="round" stroke-linecap="round"/><polyline points="1287.7,179.2 1303.6,203.1" fill="none" stroke="#38393d" stroke-width="1.0" vector-effect="non-scaling-stroke" stroke-linejoin="round" stroke-linecap="round"/><polyline points="1200.2,264.1 1213.4,301.3" fill="none" stroke="#38393d" stroke-width="1.0" vector-effect="non-scaling-stroke" stroke-linejoin="round" stroke-linecap="round"/><polyline points="1216.1,258.8 1229.4,293.3" fill="none" stroke="#38393d" stroke-width="1.0" vector-effect="non-scaling-stroke" stroke-linejoin="round" stroke-linecap="round"/><polyline points="1232.0,250.9 1245.3,285.4" fill="none" stroke="#38393d" stroke-width="1.0" vector-effect="non-scaling-stroke" stroke-linejoin="round" stroke-linecap="round"/><polyline points="1247.9,245.6 1261.2,277.4" fill="none" stroke="#38393d" stroke-width="1.0" vector-effect="non-scaling-stroke" stroke-linejoin="round" stroke-linecap="round"/><polyline points="1271.8,237.6 1293.0,274.7" fill="none" stroke="#38393d" stroke-width="1.0" vector-effect="non-scaling-stroke" stroke-linejoin="round" stroke-linecap="round"/><polyline points="1287.7,234.9 1303.6,264.1" fill="none" stroke="#38393d" stroke-width="1.0" vector-effect="non-scaling-stroke" stroke-linejoin="round" stroke-linecap="round"/><polyline points="1128.5,317.2 1149.8,338.4" fill="none" stroke="#38393d" stroke-width="1.0" vector-effect="non-scaling-stroke" stroke-linejoin="round" stroke-linecap="round"/><polyline points="1155.1,306.6 1181.6,327.8" fill="none" stroke="#38393d" stroke-width="1.0" vector-effect="non-scaling-stroke" stroke-linejoin="round" stroke-linecap="round"/><polyline points="1324.9,211.1 1367.3,200.5" fill="none" stroke="#38393d" stroke-width="1.0" vector-effect="non-scaling-stroke" stroke-linejoin="round" stroke-linecap="round"/><polyline points="1322.2,245.6 1367.3,237.6" fill="none" stroke="#38393d" stroke-width="1.0" vector-effect="non-scaling-stroke" stroke-linejoin="round" stroke-linecap="round"/><polyline points="1322.2,274.7 1375.3,282.7" fill="none" stroke="#38393d" stroke-width="1.0" vector-effect="non-scaling-stroke" stroke-linejoin="round" stroke-linecap="round"/><polyline points="1330.2,269.4 1335.5,296.0" fill="none" stroke="#38393d" stroke-width="1.0" vector-effect="non-scaling-stroke" stroke-linejoin="round" stroke-linecap="round"/><polyline points="1346.1,269.4 1348.7,290.7" fill="none" stroke="#38393d" stroke-width="1.0" vector-effect="non-scaling-stroke" stroke-linejoin="round" stroke-linecap="round"/><polyline points="1359.4,184.5 1367.3,237.6" fill="none" stroke="#38393d" stroke-width="1.0" vector-effect="non-scaling-stroke" stroke-linejoin="round" stroke-linecap="round"/><polyline points="1375.3,179.2 1388.5,211.1" fill="none" stroke="#38393d" stroke-width="1.0" vector-effect="non-scaling-stroke" stroke-linejoin="round" stroke-linecap="round"/><polyline points="1324.9,306.6 1340.8,343.7 1362.0,370.3 1367.3,396.8" fill="none" stroke="#38393d" stroke-width="1.0" vector-effect="non-scaling-stroke" stroke-linejoin="round" stroke-linecap="round"/><polyline points="1335.5,317.2 1367.3,306.6 1393.9,317.2 1407.1,343.7 1399.2,370.3" fill="none" stroke="#38393d" stroke-width="1.0" vector-effect="non-scaling-stroke" stroke-linejoin="round" stroke-linecap="round"/><polyline points="1367.3,322.5 1388.5,311.9 1409.8,327.8" fill="none" stroke="#38393d" stroke-width="1.0" vector-effect="non-scaling-stroke" stroke-linejoin="round" stroke-linecap="round"/><polyline points="1409.8,301.3 1433.7,322.5 1446.9,349.0" fill="none" stroke="#38393d" stroke-width="1.0" vector-effect="non-scaling-stroke" stroke-linejoin="round" stroke-linecap="round"/><polyline points="1420.4,296.0 1446.9,306.6 1473.5,296.0 1486.7,280.0" fill="none" stroke="#38393d" stroke-width="1.0" vector-effect="non-scaling-stroke" stroke-linejoin="round" stroke-linecap="round"/><polyline points="1460.2,200.5 1473.5,237.6 1500.0,264.1 1526.5,277.4 1553.0,290.7" fill="none" stroke="#38393d" stroke-width="1.0" vector-effect="non-scaling-stroke" stroke-linejoin="round" stroke-linecap="round"/><polyline points="1473.5,189.8 1500.0,224.3 1515.9,250.9 1553.0,269.4" fill="none" stroke="#38393d" stroke-width="1.0" vector-effect="non-scaling-stroke" stroke-linejoin="round" stroke-linecap="round"/><polyline points="1526.5,197.8 1539.8,237.6 1574.3,258.8" fill="none" stroke="#38393d" stroke-width="1.0" vector-effect="non-scaling-stroke" stroke-linejoin="round" stroke-linecap="round"/><polyline points="1542.4,211.1 1578.0,237.6" fill="none" stroke="#38393d" stroke-width="1.0" vector-effect="non-scaling-stroke" stroke-linejoin="round" stroke-linecap="round"/><polyline points="1500.0,290.7 1526.5,306.6" fill="none" stroke="#38393d" stroke-width="1.0" vector-effect="non-scaling-stroke" stroke-linejoin="round" stroke-linecap="round"/><polyline points="1250.6,343.7 1271.8,354.3 1293.0,343.7" fill="none" stroke="#38393d" stroke-width="1.0" vector-effect="non-scaling-stroke" stroke-linejoin="round" stroke-linecap="round"/><polyline points="1261.2,370.3 1282.4,359.6" fill="none" stroke="#38393d" stroke-width="1.0" vector-effect="non-scaling-stroke" stroke-linejoin="round" stroke-linecap="round"/><polyline points="1194.9,370.3 1224.0,375.6 1245.3,365.0 1271.8,375.6" fill="none" stroke="#38393d" stroke-width="1.0" vector-effect="non-scaling-stroke" stroke-linejoin="round" stroke-linecap="round"/><polyline points="1250.6,396.8 1271.8,423.3 1319.6,412.7" fill="none" stroke="#38393d" stroke-width="1.0" vector-effect="non-scaling-stroke" stroke-linejoin="round" stroke-linecap="round"/><polyline points="1335.5,423.3 1362.0,436.6" fill="none" stroke="#38393d" stroke-width="1.0" vector-effect="non-scaling-stroke" stroke-linejoin="round" stroke-linecap="round"/><polyline points="1446.9,423.3 1454.9,462.1" fill="none" stroke="#38393d" stroke-width="1.0" vector-effect="non-scaling-stroke" stroke-linejoin="round" stroke-linecap="round"/><polyline points="1473.5,423.3 1478.8,462.1" fill="none" stroke="#38393d" stroke-width="1.0" vector-effect="non-scaling-stroke" stroke-linejoin="round" stroke-linecap="round"/><polyline points="1500.0,420.7 1505.3,462.1" fill="none" stroke="#38393d" stroke-width="1.0" vector-effect="non-scaling-stroke" stroke-linejoin="round" stroke-linecap="round"/><polyline points="1521.2,412.7 1539.8,449.9" fill="none" stroke="#38393d" stroke-width="1.0" vector-effect="non-scaling-stroke" stroke-linejoin="round" stroke-linecap="round"/><polyline points="1407.1,396.8 1433.7,412.7 1446.9,436.6" fill="none" stroke="#38393d" stroke-width="1.0" vector-effect="non-scaling-stroke" stroke-linejoin="round" stroke-linecap="round"/><polyline points="1539.8,396.8 1566.3,391.5" fill="none" stroke="#38393d" stroke-width="1.0" vector-effect="non-scaling-stroke" stroke-linejoin="round" stroke-linecap="round"/><polyline points="1553.0,412.7 1578.0,404.7" fill="none" stroke="#38393d" stroke-width="1.0" vector-effect="non-scaling-stroke" stroke-linejoin="round" stroke-linecap="round"/><polyline points="1578.0,197.8 1609.8,195.1" fill="none" stroke="#38393d" stroke-width="1.0" vector-effect="non-scaling-stroke" stroke-linejoin="round" stroke-linecap="round"/><polyline points="1578.0,224.3 1612.5,219.0" fill="none" stroke="#38393d" stroke-width="1.0" vector-effect="non-scaling-stroke" stroke-linejoin="round" stroke-linecap="round"/><polyline points="1578.0,250.9 1609.8,242.9" fill="none" stroke="#38393d" stroke-width="1.0" vector-effect="non-scaling-stroke" stroke-linejoin="round" stroke-linecap="round"/><polyline points="1580.7,306.6 1609.8,317.2 1636.4,311.9" fill="none" stroke="#38393d" stroke-width="1.0" vector-effect="non-scaling-stroke" stroke-linejoin="round" stroke-linecap="round"/><polyline points="1588.6,327.8 1636.4,341.1" fill="none" stroke="#38393d" stroke-width="1.0" vector-effect="non-scaling-stroke" stroke-linejoin="round" stroke-linecap="round"/><polyline points="1588.6,359.6 1631.1,357.0" fill="none" stroke="#38393d" stroke-width="1.0" vector-effect="non-scaling-stroke" stroke-linejoin="round" stroke-linecap="round"/><polyline points="1578.0,383.5 1631.1,375.6" fill="none" stroke="#38393d" stroke-width="1.0" vector-effect="non-scaling-stroke" stroke-linejoin="round" stroke-linecap="round"/><polyline points="1593.9,402.1 1631.1,407.4" fill="none" stroke="#38393d" stroke-width="1.0" vector-effect="non-scaling-stroke" stroke-linejoin="round" stroke-linecap="round"/><polyline points="1578.0,423.3 1623.1,428.6" fill="none" stroke="#38393d" stroke-width="1.0" vector-effect="non-scaling-stroke" stroke-linejoin="round" stroke-linecap="round"/><polyline points="1588.6,375.6 1593.9,423.3" fill="none" stroke="#38393d" stroke-width="1.0" vector-effect="non-scaling-stroke" stroke-linejoin="round" stroke-linecap="round"/><polyline points="1607.2,391.5 1612.5,423.3" fill="none" stroke="#38393d" stroke-width="1.0" vector-effect="non-scaling-stroke" stroke-linejoin="round" stroke-linecap="round"/><polyline points="1612.5,264.1 1641.7,269.4" fill="none" stroke="#38393d" stroke-width="1.0" vector-effect="non-scaling-stroke" stroke-linejoin="round" stroke-linecap="round"/><polyline points="1617.8,282.7 1641.7,277.4" fill="none" stroke="#38393d" stroke-width="1.0" vector-effect="non-scaling-stroke" stroke-linejoin="round" stroke-linecap="round"/><polyline points="1625.8,298.6 1641.7,306.6" fill="none" stroke="#38393d" stroke-width="1.0" vector-effect="non-scaling-stroke" stroke-linejoin="round" stroke-linecap="round"/><polyline points="1578.0,272.1 1607.2,277.4" fill="none" stroke="#38393d" stroke-width="1.0" vector-effect="non-scaling-stroke" stroke-linejoin="round" stroke-linecap="round"/><polyline points="1578.0,285.4 1588.6,288.0" fill="none" stroke="#38393d" stroke-width="1.0" vector-effect="non-scaling-stroke" stroke-linejoin="round" stroke-linecap="round"/><polyline points="626.0,533.6 636.6,549.6 655.2,557.5 657.8,565.5 644.6,568.1 655.2,576.1 668.5,589.4 689.7,605.3 697.6,605.3 697.6,621.2 684.4,623.8 702.9,634.5" fill="none" stroke="#38393d" stroke-width="1.0" vector-effect="non-scaling-stroke" stroke-linejoin="round" stroke-linecap="round"/><polyline points="891.3,589.4 907.2,592.0 920.5,610.6 931.1,600.0 957.7,600.0 1037.2,573.4 1077.0,557.5 1102.0,552.2" fill="none" stroke="#38393d" stroke-width="1.0" vector-effect="non-scaling-stroke" stroke-linejoin="round" stroke-linecap="round"/><polyline points="925.8,605.3 955.0,613.2 968.3,605.3 1024.0,597.3 1063.8,586.7 1102.0,586.7" fill="none" stroke="#38393d" stroke-width="1.0" vector-effect="non-scaling-stroke" stroke-linejoin="round" stroke-linecap="round"/><polyline points="753.4,647.7 795.8,645.1 798.5,634.5 811.7,645.1 827.6,634.5 843.6,653.0 859.5,645.1 864.8,637.1 875.4,634.5 888.7,613.2 891.3,592.0" fill="none" stroke="#38393d" stroke-width="1.0" vector-effect="non-scaling-stroke" stroke-linejoin="round" stroke-linecap="round"/><polyline points="737.4,735.3 774.6,735.3 806.4,730.0 838.3,716.7 867.4,703.4 875.4,714.1 870.1,727.3 880.7,748.5 944.4,766.1" fill="none" stroke="#38393d" stroke-width="1.0" vector-effect="non-scaling-stroke" stroke-linejoin="round" stroke-linecap="round"/><polyline points="901.9,737.9 915.2,722.0 957.7,708.7 984.2,690.2 1016.0,703.4 1039.9,690.2" fill="none" stroke="#38393d" stroke-width="1.0" vector-effect="non-scaling-stroke" stroke-linejoin="round" stroke-linecap="round"/><polyline points="1071.7,735.3 1102.0,722.0" fill="none" stroke="#38393d" stroke-width="1.0" vector-effect="non-scaling-stroke" stroke-linejoin="round" stroke-linecap="round"/><polyline points="626.0,679.6 647.2,674.3 657.8,676.9 663.1,690.2 679.1,684.9 705.6,671.6 724.2,684.9" fill="none" stroke="#38393d" stroke-width="1.0" vector-effect="non-scaling-stroke" stroke-linejoin="round" stroke-linecap="round"/><polyline points="825.0,488.5 854.2,477.9 880.7,493.8" fill="none" stroke="#38393d" stroke-width="1.0" vector-effect="non-scaling-stroke" stroke-linejoin="round" stroke-linecap="round"/><polyline points="827.6,509.8 864.8,504.5" fill="none" stroke="#38393d" stroke-width="1.0" vector-effect="non-scaling-stroke" stroke-linejoin="round" stroke-linecap="round"/><polyline points="838.3,528.3 859.5,515.1" fill="none" stroke="#38393d" stroke-width="1.0" vector-effect="non-scaling-stroke" stroke-linejoin="round" stroke-linecap="round"/><polyline points="1018.7,467.3 1029.3,472.6" fill="none" stroke="#38393d" stroke-width="1.0" vector-effect="non-scaling-stroke" stroke-linejoin="round" stroke-linecap="round"/><polyline points="1039.9,695.5 1071.7,700.8" fill="none" stroke="#38393d" stroke-width="1.0" vector-effect="non-scaling-stroke" stroke-linejoin="round" stroke-linecap="round"/><polyline points="1050.5,706.1 1102.0,695.5" fill="none" stroke="#38393d" stroke-width="1.0" vector-effect="non-scaling-stroke" stroke-linejoin="round" stroke-linecap="round"/><polyline points="1102.0,549.6 1128.5,552.2 1165.7,541.6 1181.6,533.6 1213.4,523.0 1240.0,515.1 1261.2,493.8 1277.1,515.1 1303.6,520.4 1319.6,509.8 1340.8,520.4 1367.3,523.0" fill="none" stroke="#38393d" stroke-width="1.0" vector-effect="non-scaling-stroke" stroke-linejoin="round" stroke-linecap="round"/><polyline points="1102.0,592.0 1115.3,589.4 1131.2,570.8 1155.1,568.1 1168.3,554.9 1163.0,509.8 1186.9,515.1 1165.7,483.2 1181.6,467.3 1197.5,462.0" fill="none" stroke="#38393d" stroke-width="1.0" vector-effect="non-scaling-stroke" stroke-linejoin="round" stroke-linecap="round"/><polyline points="1139.1,682.2 1197.5,674.3 1200.2,690.2 1141.8,687.5 1139.1,682.2" fill="none" stroke="#38393d" stroke-width="1.0" vector-effect="non-scaling-stroke" stroke-linejoin="round" stroke-linecap="round"/><polyline points="1149.8,679.6 1149.8,687.5" fill="none" stroke="#38393d" stroke-width="1.0" vector-effect="non-scaling-stroke" stroke-linejoin="round" stroke-linecap="round"/><polyline points="1163.0,676.9 1163.0,687.5" fill="none" stroke="#38393d" stroke-width="1.0" vector-effect="non-scaling-stroke" stroke-linejoin="round" stroke-linecap="round"/><polyline points="1176.3,674.3 1176.3,687.5" fill="none" stroke="#38393d" stroke-width="1.0" vector-effect="non-scaling-stroke" stroke-linejoin="round" stroke-linecap="round"/><polyline points="1189.6,674.3 1189.6,687.5" fill="none" stroke="#38393d" stroke-width="1.0" vector-effect="non-scaling-stroke" stroke-linejoin="round" stroke-linecap="round"/><polyline points="1128.5,669.0 1165.7,647.7 1197.5,634.5" fill="none" stroke="#38393d" stroke-width="1.0" vector-effect="non-scaling-stroke" stroke-linejoin="round" stroke-linecap="round"/><polyline points="1155.1,663.6 1208.1,642.4" fill="none" stroke="#38393d" stroke-width="1.0" vector-effect="non-scaling-stroke" stroke-linejoin="round" stroke-linecap="round"/><polyline points="1181.6,642.4 1200.2,674.3" fill="none" stroke="#38393d" stroke-width="1.0" vector-effect="non-scaling-stroke" stroke-linejoin="round" stroke-linecap="round"/><polyline points="1229.4,642.4 1274.5,637.1" fill="none" stroke="#38393d" stroke-width="1.0" vector-effect="non-scaling-stroke" stroke-linejoin="round" stroke-linecap="round"/><polyline points="1234.7,653.0 1261.2,645.1" fill="none" stroke="#38393d" stroke-width="1.0" vector-effect="non-scaling-stroke" stroke-linejoin="round" stroke-linecap="round"/><polyline points="1319.6,621.2 1362.0,610.6" fill="none" stroke="#38393d" stroke-width="1.0" vector-effect="non-scaling-stroke" stroke-linejoin="round" stroke-linecap="round"/><polyline points="1322.2,631.8 1362.0,626.5" fill="none" stroke="#38393d" stroke-width="1.0" vector-effect="non-scaling-stroke" stroke-linejoin="round" stroke-linecap="round"/><polyline points="1324.9,610.6 1330.2,642.4" fill="none" stroke="#38393d" stroke-width="1.0" vector-effect="non-scaling-stroke" stroke-linejoin="round" stroke-linecap="round"/><polyline points="1340.8,605.3 1343.4,637.1" fill="none" stroke="#38393d" stroke-width="1.0" vector-effect="non-scaling-stroke" stroke-linejoin="round" stroke-linecap="round"/><polyline points="1351.4,610.6 1354.1,642.4" fill="none" stroke="#38393d" stroke-width="1.0" vector-effect="non-scaling-stroke" stroke-linejoin="round" stroke-linecap="round"/><polyline points="1375.3,594.7 1401.8,600.0" fill="none" stroke="#38393d" stroke-width="1.0" vector-effect="non-scaling-stroke" stroke-linejoin="round" stroke-linecap="round"/><polyline points="1431.0,565.5 1452.2,621.2" fill="none" stroke="#38393d" stroke-width="1.0" vector-effect="non-scaling-stroke" stroke-linejoin="round" stroke-linecap="round"/><polyline points="1444.3,554.9 1468.1,615.9" fill="none" stroke="#38393d" stroke-width="1.0" vector-effect="non-scaling-stroke" stroke-linejoin="round" stroke-linecap="round"/><polyline points="1500.0,536.3 1515.9,600.0" fill="none" stroke="#38393d" stroke-width="1.0" vector-effect="non-scaling-stroke" stroke-linejoin="round" stroke-linecap="round"/><polyline points="1515.9,533.6 1531.8,594.7" fill="none" stroke="#38393d" stroke-width="1.0" vector-effect="non-scaling-stroke" stroke-linejoin="round" stroke-linecap="round"/><polyline points="1531.8,531.0 1547.7,589.4" fill="none" stroke="#38393d" stroke-width="1.0" vector-effect="non-scaling-stroke" stroke-linejoin="round" stroke-linecap="round"/><polyline points="1423.0,578.7 1486.7,562.8" fill="none" stroke="#38393d" stroke-width="1.0" vector-effect="non-scaling-stroke" stroke-linejoin="round" stroke-linecap="round"/><polyline points="1420.4,589.4 1484.1,573.4" fill="none" stroke="#38393d" stroke-width="1.0" vector-effect="non-scaling-stroke" stroke-linejoin="round" stroke-linecap="round"/><polyline points="1462.8,541.6 1478.8,594.7" fill="none" stroke="#38393d" stroke-width="1.0" vector-effect="non-scaling-stroke" stroke-linejoin="round" stroke-linecap="round"/><polyline points="1473.5,679.6 1500.0,663.6" fill="none" stroke="#38393d" stroke-width="1.0" vector-effect="non-scaling-stroke" stroke-linejoin="round" stroke-linecap="round"/><polyline points="1494.7,695.5 1526.5,674.3" fill="none" stroke="#38393d" stroke-width="1.0" vector-effect="non-scaling-stroke" stroke-linejoin="round" stroke-linecap="round"/><polyline points="1510.6,711.4 1553.0,684.9" fill="none" stroke="#38393d" stroke-width="1.0" vector-effect="non-scaling-stroke" stroke-linejoin="round" stroke-linecap="round"/><polyline points="1526.5,727.3 1569.0,700.8" fill="none" stroke="#38393d" stroke-width="1.0" vector-effect="non-scaling-stroke" stroke-linejoin="round" stroke-linecap="round"/><polyline points="1494.7,716.7 1515.9,766.1" fill="none" stroke="#38393d" stroke-width="1.0" vector-effect="non-scaling-stroke" stroke-linejoin="round" stroke-linecap="round"/><polyline points="1547.7,700.8 1578.0,687.5" fill="none" stroke="#38393d" stroke-width="1.0" vector-effect="non-scaling-stroke" stroke-linejoin="round" stroke-linecap="round"/><polyline points="1553.0,727.3 1578.0,716.7" fill="none" stroke="#38393d" stroke-width="1.0" vector-effect="non-scaling-stroke" stroke-linejoin="round" stroke-linecap="round"/><polyline points="1383.2,700.8 1407.1,687.5 1433.7,682.2" fill="none" stroke="#38393d" stroke-width="1.0" vector-effect="non-scaling-stroke" stroke-linejoin="round" stroke-linecap="round"/><polyline points="1393.9,711.4 1431.0,695.5" fill="none" stroke="#38393d" stroke-width="1.0" vector-effect="non-scaling-stroke" stroke-linejoin="round" stroke-linecap="round"/><polyline points="1446.9,674.3 1473.5,700.8" fill="none" stroke="#38393d" stroke-width="1.0" vector-effect="non-scaling-stroke" stroke-linejoin="round" stroke-linecap="round"/><polyline points="1391.2,573.4 1412.4,562.8" fill="none" stroke="#38393d" stroke-width="1.0" vector-effect="non-scaling-stroke" stroke-linejoin="round" stroke-linecap="round"/><polyline points="1393.9,626.5 1407.1,653.0" fill="none" stroke="#38393d" stroke-width="1.0" vector-effect="non-scaling-stroke" stroke-linejoin="round" stroke-linecap="round"/><polyline points="1399.2,637.1 1420.4,621.2" fill="none" stroke="#38393d" stroke-width="1.0" vector-effect="non-scaling-stroke" stroke-linejoin="round" stroke-linecap="round"/><polyline points="942.7,859.1 971.9,883.1 998.5,891.1" fill="none" stroke="#38393d" stroke-width="1.0" vector-effect="non-scaling-stroke" stroke-linejoin="round" stroke-linecap="round"/><polyline points="963.9,843.2 987.9,853.8 1003.9,877.8" fill="none" stroke="#38393d" stroke-width="1.0" vector-effect="non-scaling-stroke" stroke-linejoin="round" stroke-linecap="round"/><polyline points="918.7,915.0 945.3,899.0 971.9,909.7 998.5,907.0" fill="none" stroke="#38393d" stroke-width="1.0" vector-effect="non-scaling-stroke" stroke-linejoin="round" stroke-linecap="round"/><polyline points="932.0,925.7 958.6,952.3" fill="none" stroke="#38393d" stroke-width="1.0" vector-effect="non-scaling-stroke" stroke-linejoin="round" stroke-linecap="round"/><polyline points="918.7,931.0 945.3,920.3 966.6,931.0" fill="none" stroke="#38393d" stroke-width="1.0" vector-effect="non-scaling-stroke" stroke-linejoin="round" stroke-linecap="round"/><polyline points="854.8,968.2 892.1,962.9" fill="none" stroke="#38393d" stroke-width="1.0" vector-effect="non-scaling-stroke" stroke-linejoin="round" stroke-linecap="round"/><polyline points="838.9,968.2 854.8,946.9 876.1,936.3 897.4,936.3" fill="none" stroke="#38393d" stroke-width="1.0" vector-effect="non-scaling-stroke" stroke-linejoin="round" stroke-linecap="round"/><polyline points="1038.5,962.9 1078.4,952.3" fill="none" stroke="#38393d" stroke-width="1.0" vector-effect="non-scaling-stroke" stroke-linejoin="round" stroke-linecap="round"/><polyline points="985.2,992.2 1025.1,978.9 1065.1,968.2 1094.3,962.9" fill="none" stroke="#38393d" stroke-width="1.0" vector-effect="non-scaling-stroke" stroke-linejoin="round" stroke-linecap="round"/><polyline points="1006.5,984.2 1030.5,1005.5" fill="none" stroke="#38393d" stroke-width="1.0" vector-effect="non-scaling-stroke" stroke-linejoin="round" stroke-linecap="round"/><polyline points="1051.8,973.6 1073.0,984.2" fill="none" stroke="#38393d" stroke-width="1.0" vector-effect="non-scaling-stroke" stroke-linejoin="round" stroke-linecap="round"/><polyline points="1017.2,819.2 1038.5,848.5" fill="none" stroke="#38393d" stroke-width="1.0" vector-effect="non-scaling-stroke" stroke-linejoin="round" stroke-linecap="round"/><polyline points="1046.4,813.9 1065.1,845.8" fill="none" stroke="#38393d" stroke-width="1.0" vector-effect="non-scaling-stroke" stroke-linejoin="round" stroke-linecap="round"/><polyline points="1075.7,779.3 1094.3,819.2" fill="none" stroke="#38393d" stroke-width="1.0" vector-effect="non-scaling-stroke" stroke-linejoin="round" stroke-linecap="round"/><polyline points="748.4,952.3 759.0,1000.2" fill="none" stroke="#38393d" stroke-width="1.0" vector-effect="non-scaling-stroke" stroke-linejoin="round" stroke-linecap="round"/><polyline points="705.8,989.5 711.2,1021.5 703.2,1032.1" fill="none" stroke="#38393d" stroke-width="1.0" vector-effect="non-scaling-stroke" stroke-linejoin="round" stroke-linecap="round"/><polyline points="713.8,968.2 721.8,1005.5 732.4,1032.1" fill="none" stroke="#38393d" stroke-width="1.0" vector-effect="non-scaling-stroke" stroke-linejoin="round" stroke-linecap="round"/><polyline points="721.8,978.9 737.8,1005.5" fill="none" stroke="#38393d" stroke-width="1.0" vector-effect="non-scaling-stroke" stroke-linejoin="round" stroke-linecap="round"/><polyline points="626.0,771.3 652.6,792.6" fill="none" stroke="#38393d" stroke-width="1.0" vector-effect="non-scaling-stroke" stroke-linejoin="round" stroke-linecap="round"/><polyline points="687.2,872.4 689.9,907.0" fill="none" stroke="#38393d" stroke-width="1.0" vector-effect="non-scaling-stroke" stroke-linejoin="round" stroke-linecap="round"/><polyline points="1125.9,800.6 1136.6,819.2" fill="none" stroke="#38393d" stroke-width="1.0" vector-effect="non-scaling-stroke" stroke-linejoin="round" stroke-linecap="round"/><polyline points="1107.3,837.8 1139.3,829.9 1155.2,840.5" fill="none" stroke="#38393d" stroke-width="1.0" vector-effect="non-scaling-stroke" stroke-linejoin="round" stroke-linecap="round"/><polyline points="1155.2,766.0 1165.9,782.0" fill="none" stroke="#38393d" stroke-width="1.0" vector-effect="non-scaling-stroke" stroke-linejoin="round" stroke-linecap="round"/><polyline points="1181.8,774.0 1189.8,805.9" fill="none" stroke="#38393d" stroke-width="1.0" vector-effect="non-scaling-stroke" stroke-linejoin="round" stroke-linecap="round"/><polyline points="1282.9,837.8 1408.0,843.2" fill="none" stroke="#38393d" stroke-width="1.0" vector-effect="non-scaling-stroke" stroke-linejoin="round" stroke-linecap="round"/><polyline points="1282.9,853.8 1408.0,853.8" fill="none" stroke="#38393d" stroke-width="1.0" vector-effect="non-scaling-stroke" stroke-linejoin="round" stroke-linecap="round"/><polyline points="1282.9,867.1 1447.9,872.4" fill="none" stroke="#38393d" stroke-width="1.0" vector-effect="non-scaling-stroke" stroke-linejoin="round" stroke-linecap="round"/><polyline points="1288.3,837.8 1288.3,888.4" fill="none" stroke="#38393d" stroke-width="1.0" vector-effect="non-scaling-stroke" stroke-linejoin="round" stroke-linecap="round"/><polyline points="1301.6,835.2 1300.2,888.4" fill="none" stroke="#38393d" stroke-width="1.0" vector-effect="non-scaling-stroke" stroke-linejoin="round" stroke-linecap="round"/><polyline points="1320.2,835.2 1317.5,888.4" fill="none" stroke="#38393d" stroke-width="1.0" vector-effect="non-scaling-stroke" stroke-linejoin="round" stroke-linecap="round"/><polyline points="1338.8,835.2 1336.2,891.1" fill="none" stroke="#38393d" stroke-width="1.0" vector-effect="non-scaling-stroke" stroke-linejoin="round" stroke-linecap="round"/><polyline points="1357.5,835.2 1354.8,891.1" fill="none" stroke="#38393d" stroke-width="1.0" vector-effect="non-scaling-stroke" stroke-linejoin="round" stroke-linecap="round"/><polyline points="1376.1,829.9 1373.4,893.7" fill="none" stroke="#38393d" stroke-width="1.0" vector-effect="non-scaling-stroke" stroke-linejoin="round" stroke-linecap="round"/><polyline points="1397.4,837.8 1394.7,893.7" fill="none" stroke="#38393d" stroke-width="1.0" vector-effect="non-scaling-stroke" stroke-linejoin="round" stroke-linecap="round"/><polyline points="1416.0,861.8 1416.0,896.4" fill="none" stroke="#38393d" stroke-width="1.0" vector-effect="non-scaling-stroke" stroke-linejoin="round" stroke-linecap="round"/><polyline points="1144.6,891.1 1181.8,877.8 1245.7,867.1" fill="none" stroke="#38393d" stroke-width="1.0" vector-effect="non-scaling-stroke" stroke-linejoin="round" stroke-linecap="round"/><polyline points="1149.9,880.4 1181.8,867.1 1240.4,856.5" fill="none" stroke="#38393d" stroke-width="1.0" vector-effect="non-scaling-stroke" stroke-linejoin="round" stroke-linecap="round"/><polyline points="1165.9,840.5 1181.8,872.4 1197.8,896.4" fill="none" stroke="#38393d" stroke-width="1.0" vector-effect="non-scaling-stroke" stroke-linejoin="round" stroke-linecap="round"/><polyline points="1155.2,856.5 1168.5,888.4" fill="none" stroke="#38393d" stroke-width="1.0" vector-effect="non-scaling-stroke" stroke-linejoin="round" stroke-linecap="round"/><polyline points="1176.5,835.2 1197.8,872.4" fill="none" stroke="#38393d" stroke-width="1.0" vector-effect="non-scaling-stroke" stroke-linejoin="round" stroke-linecap="round"/><polyline points="1197.8,832.5 1213.8,867.1" fill="none" stroke="#38393d" stroke-width="1.0" vector-effect="non-scaling-stroke" stroke-linejoin="round" stroke-linecap="round"/><polyline points="1219.1,824.5 1229.7,864.5" fill="none" stroke="#38393d" stroke-width="1.0" vector-effect="non-scaling-stroke" stroke-linejoin="round" stroke-linecap="round"/><polyline points="1240.4,821.9 1245.7,861.8" fill="none" stroke="#38393d" stroke-width="1.0" vector-effect="non-scaling-stroke" stroke-linejoin="round" stroke-linecap="round"/><polyline points="1203.1,811.2 1240.4,803.3" fill="none" stroke="#38393d" stroke-width="1.0" vector-effect="non-scaling-stroke" stroke-linejoin="round" stroke-linecap="round"/><polyline points="1437.3,803.3 1461.2,800.6 1474.5,819.2" fill="none" stroke="#38393d" stroke-width="1.0" vector-effect="non-scaling-stroke" stroke-linejoin="round" stroke-linecap="round"/><polyline points="1421.3,835.2 1447.9,824.5 1463.9,840.5" fill="none" stroke="#38393d" stroke-width="1.0" vector-effect="non-scaling-stroke" stroke-linejoin="round" stroke-linecap="round"/><polyline points="1447.9,843.2 1474.5,837.8" fill="none" stroke="#38393d" stroke-width="1.0" vector-effect="non-scaling-stroke" stroke-linejoin="round" stroke-linecap="round"/><polyline points="1447.9,859.1 1474.5,851.2" fill="none" stroke="#38393d" stroke-width="1.0" vector-effect="non-scaling-stroke" stroke-linejoin="round" stroke-linecap="round"/><polyline points="1469.2,872.4 1490.5,867.1" fill="none" stroke="#38393d" stroke-width="1.0" vector-effect="non-scaling-stroke" stroke-linejoin="round" stroke-linecap="round"/><polyline points="1479.9,787.3 1493.2,824.5" fill="none" stroke="#38393d" stroke-width="1.0" vector-effect="non-scaling-stroke" stroke-linejoin="round" stroke-linecap="round"/><polyline points="1495.3,714.9 1558.8,680.8" fill="none" stroke="#38393d" stroke-width="1.0" vector-effect="non-scaling-stroke" stroke-linejoin="round" stroke-linecap="round"/><polyline points="1504.4,726.2 1577.0,692.2" fill="none" stroke="#38393d" stroke-width="1.0" vector-effect="non-scaling-stroke" stroke-linejoin="round" stroke-linecap="round"/><polyline points="1513.4,742.1 1595.1,699.0" fill="none" stroke="#38393d" stroke-width="1.0" vector-effect="non-scaling-stroke" stroke-linejoin="round" stroke-linecap="round"/><polyline points="1527.0,753.4 1590.6,714.9" fill="none" stroke="#38393d" stroke-width="1.0" vector-effect="non-scaling-stroke" stroke-linejoin="round" stroke-linecap="round"/><polyline points="1540.7,689.9 1558.8,721.7" fill="none" stroke="#38393d" stroke-width="1.0" vector-effect="non-scaling-stroke" stroke-linejoin="round" stroke-linecap="round"/><polyline points="1558.8,680.8 1577.0,712.6" fill="none" stroke="#38393d" stroke-width="1.0" vector-effect="non-scaling-stroke" stroke-linejoin="round" stroke-linecap="round"/><polyline points="1572.4,671.8 1590.6,703.5" fill="none" stroke="#38393d" stroke-width="1.0" vector-effect="non-scaling-stroke" stroke-linejoin="round" stroke-linecap="round"/><polyline points="1588.3,662.7 1604.2,694.4" fill="none" stroke="#38393d" stroke-width="1.0" vector-effect="non-scaling-stroke" stroke-linejoin="round" stroke-linecap="round"/><polyline points="1599.6,653.6 1617.8,685.4" fill="none" stroke="#38393d" stroke-width="1.0" vector-effect="non-scaling-stroke" stroke-linejoin="round" stroke-linecap="round"/><polyline points="1468.1,767.0 1506.6,789.7" fill="none" stroke="#38393d" stroke-width="1.0" vector-effect="non-scaling-stroke" stroke-linejoin="round" stroke-linecap="round"/><polyline points="1472.6,798.8 1490.7,767.0" fill="none" stroke="#38393d" stroke-width="1.0" vector-effect="non-scaling-stroke" stroke-linejoin="round" stroke-linecap="round"/><polyline points="1486.2,805.6 1502.1,778.4" fill="none" stroke="#38393d" stroke-width="1.0" vector-effect="non-scaling-stroke" stroke-linejoin="round" stroke-linecap="round"/><polyline points="1468.1,821.5 1481.7,785.2" fill="none" stroke="#38393d" stroke-width="1.0" vector-effect="non-scaling-stroke" stroke-linejoin="round" stroke-linecap="round"/><polyline points="1481.7,844.2 1499.8,817.0" fill="none" stroke="#38393d" stroke-width="1.0" vector-effect="non-scaling-stroke" stroke-linejoin="round" stroke-linecap="round"/><polyline points="1445.4,844.2 1483.9,837.4" fill="none" stroke="#38393d" stroke-width="1.0" vector-effect="non-scaling-stroke" stroke-linejoin="round" stroke-linecap="round"/><polyline points="1449.9,857.8 1486.2,853.2" fill="none" stroke="#38393d" stroke-width="1.0" vector-effect="non-scaling-stroke" stroke-linejoin="round" stroke-linecap="round"/><polyline points="1436.3,866.9 1486.2,864.6" fill="none" stroke="#38393d" stroke-width="1.0" vector-effect="non-scaling-stroke" stroke-linejoin="round" stroke-linecap="round"/><polyline points="1454.4,855.5 1456.7,900.0" fill="none" stroke="#38393d" stroke-width="1.0" vector-effect="non-scaling-stroke" stroke-linejoin="round" stroke-linecap="round"/><polyline points="1468.1,857.8 1470.3,900.0" fill="none" stroke="#38393d" stroke-width="1.0" vector-effect="non-scaling-stroke" stroke-linejoin="round" stroke-linecap="round"/><polyline points="626.0,296.0 636.6,288.0 644.6,290.7 649.9,277.4 660.5,280.0 660.5,269.4 649.9,261.5 636.6,256.2 634.0,245.6 641.9,227.0 652.5,219.0 665.8,209.7 681.7,215.0 726.8,204.4 737.4,207.1 750.7,200.5 785.2,196.5 798.5,192.5 819.7,189.8 830.3,197.8 835.6,211.1" fill="none" stroke="#4a4c53" stroke-width="2.8" vector-effect="non-scaling-stroke" stroke-linejoin="round" stroke-linecap="round"/><polyline points="785.2,158.0 822.3,179.2 835.6,203.1 833.0,219.0 838.3,232.3 864.8,245.6" fill="none" stroke="#4a4c53" stroke-width="2.8" vector-effect="non-scaling-stroke" stroke-linejoin="round" stroke-linecap="round"/><polyline points="928.5,158.0 936.4,189.8 941.7,208.4 947.0,237.6 955.0,290.7" fill="none" stroke="#4a4c53" stroke-width="2.8" vector-effect="non-scaling-stroke" stroke-linejoin="round" stroke-linecap="round"/><polyline points="838.3,211.1 907.2,211.1 939.1,205.8 1024.0,189.8 1077.0,179.2 1093.0,171.3" fill="none" stroke="#4a4c53" stroke-width="2.8" vector-effect="non-scaling-stroke" stroke-linejoin="round" stroke-linecap="round"/><polyline points="864.8,245.6 944.4,227.0 1034.6,209.7 1087.7,197.8 1102.0,184.5" fill="none" stroke="#4a4c53" stroke-width="2.8" vector-effect="non-scaling-stroke" stroke-linejoin="round" stroke-linecap="round"/><polyline points="872.7,278.7 891.3,274.7 931.1,285.4 970.9,264.1 1010.7,237.6 1050.5,211.1 1102.0,179.2" fill="none" stroke="#4a4c53" stroke-width="2.8" vector-effect="non-scaling-stroke" stroke-linejoin="round" stroke-linecap="round"/><polyline points="830.3,290.7 854.2,281.4 872.7,278.7" fill="none" stroke="#4a4c53" stroke-width="2.8" vector-effect="non-scaling-stroke" stroke-linejoin="round" stroke-linecap="round"/><polyline points="817.0,264.1 864.8,248.2 872.7,258.8 872.7,278.7" fill="none" stroke="#4a4c53" stroke-width="2.8" vector-effect="non-scaling-stroke" stroke-linejoin="round" stroke-linecap="round"/><polyline points="822.3,269.4 830.3,290.7" fill="none" stroke="#4a4c53" stroke-width="2.8" vector-effect="non-scaling-stroke" stroke-linejoin="round" stroke-linecap="round"/><polyline points="872.7,278.7 949.7,319.8" fill="none" stroke="#4a4c53" stroke-width="2.8" vector-effect="non-scaling-stroke" stroke-linejoin="round" stroke-linecap="round"/><polyline points="931.1,285.4 963.0,301.3 984.2,302.6 1024.0,281.4 1071.7,282.7 1102.0,285.4" fill="none" stroke="#4a4c53" stroke-width="2.8" vector-effect="non-scaling-stroke" stroke-linejoin="round" stroke-linecap="round"/><polyline points="963.0,250.9 997.5,298.6 1031.9,365.0" fill="none" stroke="#4a4c53" stroke-width="2.8" vector-effect="non-scaling-stroke" stroke-linejoin="round" stroke-linecap="round"/><polyline points="917.9,462.1 944.4,433.9 978.9,404.7 1018.7,359.6 1047.9,322.5 1074.4,285.4 1102.0,256.2" fill="none" stroke="#4a4c53" stroke-width="2.8" vector-effect="non-scaling-stroke" stroke-linejoin="round" stroke-linecap="round"/><polyline points="928.5,462.1 981.5,410.1 1002.8,394.1 1050.5,354.3 1102.0,343.7" fill="none" stroke="#4a4c53" stroke-width="2.8" vector-effect="non-scaling-stroke" stroke-linejoin="round" stroke-linecap="round"/><polyline points="981.5,410.1 981.5,386.2 992.1,375.6 1002.8,394.1" fill="none" stroke="#4a4c53" stroke-width="2.8" vector-effect="non-scaling-stroke" stroke-linejoin="round" stroke-linecap="round"/><polyline points="1045.2,211.1 1071.7,280.0 1093.0,351.7" fill="none" stroke="#4a4c53" stroke-width="2.8" vector-effect="non-scaling-stroke" stroke-linejoin="round" stroke-linecap="round"/><polyline points="1077.0,274.7 1082.4,248.2 1093.0,237.6 1102.0,232.3" fill="none" stroke="#4a4c53" stroke-width="2.8" vector-effect="non-scaling-stroke" stroke-linejoin="round" stroke-linecap="round"/><polyline points="1082.4,158.0 1093.0,192.5" fill="none" stroke="#4a4c53" stroke-width="2.8" vector-effect="non-scaling-stroke" stroke-linejoin="round" stroke-linecap="round"/><polyline points="1082.4,173.9 1102.0,160.7" fill="none" stroke="#4a4c53" stroke-width="2.8" vector-effect="non-scaling-stroke" stroke-linejoin="round" stroke-linecap="round"/><polyline points="1018.7,158.0 1024.0,189.8 1034.6,209.7 1045.2,211.1" fill="none" stroke="#4a4c53" stroke-width="2.8" vector-effect="non-scaling-stroke" stroke-linejoin="round" stroke-linecap="round"/><polyline points="1047.9,322.5 1061.1,338.4 1093.0,354.3 1102.0,359.6" fill="none" stroke="#4a4c53" stroke-width="2.8" vector-effect="non-scaling-stroke" stroke-linejoin="round" stroke-linecap="round"/><polyline points="947.0,237.6 957.7,253.5 963.0,250.9" fill="none" stroke="#4a4c53" stroke-width="2.8" vector-effect="non-scaling-stroke" stroke-linejoin="round" stroke-linecap="round"/><polyline points="939.1,280.0 957.7,322.5" fill="none" stroke="#4a4c53" stroke-width="2.8" vector-effect="non-scaling-stroke" stroke-linejoin="round" stroke-linecap="round"/><polyline points="859.5,211.1 862.1,242.9" fill="none" stroke="#4a4c53" stroke-width="2.8" vector-effect="non-scaling-stroke" stroke-linejoin="round" stroke-linecap="round"/><polyline points="1018.7,359.6 1029.3,370.3" fill="none" stroke="#4a4c53" stroke-width="2.8" vector-effect="non-scaling-stroke" stroke-linejoin="round" stroke-linecap="round"/><polyline points="718.9,158.0 721.5,163.3 769.3,158.0" fill="none" stroke="#4a4c53" stroke-width="2.8" vector-effect="non-scaling-stroke" stroke-linejoin="round" stroke-linecap="round"/><polyline points="1102.0,227.0 1125.9,211.1 1147.1,192.5 1165.7,166.0 1173.6,158.0" fill="none" stroke="#4a4c53" stroke-width="2.8" vector-effect="non-scaling-stroke" stroke-linejoin="round" stroke-linecap="round"/><polyline points="1102.0,192.5 1120.6,200.5 1173.6,208.4 1186.9,219.0 1197.5,240.2 1181.6,258.8 1155.1,296.0 1136.5,314.5 1102.0,343.7" fill="none" stroke="#4a4c53" stroke-width="2.8" vector-effect="non-scaling-stroke" stroke-linejoin="round" stroke-linecap="round"/><polyline points="1102.0,264.1 1117.9,258.8 1133.8,258.8 1155.1,261.5 1189.6,248.2" fill="none" stroke="#4a4c53" stroke-width="2.8" vector-effect="non-scaling-stroke" stroke-linejoin="round" stroke-linecap="round"/><polyline points="1128.5,269.4 1125.9,282.7 1144.5,285.4 1173.6,290.7 1200.2,296.0 1224.0,280.0 1261.2,261.5 1269.2,261.5 1287.7,280.0 1301.0,288.0" fill="none" stroke="#4a4c53" stroke-width="2.8" vector-effect="non-scaling-stroke" stroke-linejoin="round" stroke-linecap="round"/><polyline points="1173.6,208.4 1213.4,197.8 1234.7,184.5 1250.6,176.6 1271.8,163.3" fill="none" stroke="#4a4c53" stroke-width="2.8" vector-effect="non-scaling-stroke" stroke-linejoin="round" stroke-linecap="round"/><polyline points="1224.0,187.2 1242.6,227.0 1266.5,256.2 1271.8,261.5" fill="none" stroke="#4a4c53" stroke-width="2.8" vector-effect="non-scaling-stroke" stroke-linejoin="round" stroke-linecap="round"/><polyline points="1181.6,258.8 1194.9,282.7 1202.8,296.0" fill="none" stroke="#4a4c53" stroke-width="2.8" vector-effect="non-scaling-stroke" stroke-linejoin="round" stroke-linecap="round"/><polyline points="1255.9,171.3 1250.6,189.8 1242.6,200.5 1226.7,211.1 1189.6,248.2" fill="none" stroke="#4a4c53" stroke-width="2.8" vector-effect="non-scaling-stroke" stroke-linejoin="round" stroke-linecap="round"/><polyline points="1102.0,314.5 1136.5,314.5 1147.1,322.5 1171.0,290.7" fill="none" stroke="#4a4c53" stroke-width="2.8" vector-effect="non-scaling-stroke" stroke-linejoin="round" stroke-linecap="round"/><polyline points="1102.0,290.7 1117.9,269.4" fill="none" stroke="#4a4c53" stroke-width="2.8" vector-effect="non-scaling-stroke" stroke-linejoin="round" stroke-linecap="round"/><polyline points="1335.5,184.5 1309.0,197.8 1261.2,219.0 1189.6,248.2 1128.5,269.4 1102.0,274.7" fill="none" stroke="#4a4c53" stroke-width="2.8" vector-effect="non-scaling-stroke" stroke-linejoin="round" stroke-linecap="round"/><polyline points="1319.6,171.3 1335.5,184.5 1364.7,179.2 1372.6,173.9 1407.1,166.0 1439.0,160.7" fill="none" stroke="#4a4c53" stroke-width="2.8" vector-effect="non-scaling-stroke" stroke-linejoin="round" stroke-linecap="round"/><polyline points="1372.6,173.9 1420.4,187.2 1446.9,181.9 1473.5,176.6 1500.0,168.6 1526.5,163.3 1578.0,158.0" fill="none" stroke="#4a4c53" stroke-width="2.8" vector-effect="non-scaling-stroke" stroke-linejoin="round" stroke-linecap="round"/><polyline points="1446.9,181.9 1500.0,189.8 1526.5,192.5 1578.0,173.9" fill="none" stroke="#4a4c53" stroke-width="2.8" vector-effect="non-scaling-stroke" stroke-linejoin="round" stroke-linecap="round"/><polyline points="1507.9,158.0 1507.9,187.2" fill="none" stroke="#4a4c53" stroke-width="2.8" vector-effect="non-scaling-stroke" stroke-linejoin="round" stroke-linecap="round"/><polyline points="1301.0,288.0 1351.4,292.0 1362.0,288.0 1377.9,292.0 1407.1,290.7 1420.4,280.0 1433.7,250.9 1452.2,224.3" fill="none" stroke="#4a4c53" stroke-width="2.8" vector-effect="non-scaling-stroke" stroke-linejoin="round" stroke-linecap="round"/><polyline points="1432.3,250.9 1452.2,238.9" fill="none" stroke="#4a4c53" stroke-width="2.8" vector-effect="non-scaling-stroke" stroke-linejoin="round" stroke-linecap="round"/><polyline points="1351.4,292.0 1367.3,317.2 1380.6,333.1 1388.5,343.7 1393.9,365.0 1404.5,378.2 1412.4,404.7 1446.9,402.1 1454.9,391.5 1473.5,386.2 1486.7,396.8 1492.0,402.1" fill="none" stroke="#4a4c53" stroke-width="2.8" vector-effect="non-scaling-stroke" stroke-linejoin="round" stroke-linecap="round"/><polyline points="1377.9,433.9 1399.2,439.2 1425.7,443.2 1439.0,433.9 1444.3,420.7 1484.1,420.7 1492.0,402.1 1505.3,388.8 1526.5,378.2 1539.8,370.3 1578.0,357.0" fill="none" stroke="#4a4c53" stroke-width="2.8" vector-effect="non-scaling-stroke" stroke-linejoin="round" stroke-linecap="round"/><polyline points="1526.5,391.5 1578.0,372.9" fill="none" stroke="#4a4c53" stroke-width="2.8" vector-effect="non-scaling-stroke" stroke-linejoin="round" stroke-linecap="round"/><polyline points="1314.3,158.0 1310.3,173.9 1311.6,211.1 1314.3,290.7 1316.9,343.7 1320.9,349.0 1312.9,370.3 1314.3,386.2 1324.9,394.1 1356.7,412.7 1375.3,423.3 1380.6,433.9 1381.9,462.1" fill="none" stroke="#4a4c53" stroke-width="5.5" vector-effect="non-scaling-stroke" stroke-linejoin="round" stroke-linecap="round"/><polyline points="1441.6,158.0 1446.9,179.2 1457.5,197.8 1452.2,224.3 1457.5,242.9 1473.5,264.1 1500.0,298.6 1526.5,338.4 1539.8,370.3 1553.0,423.3 1563.7,462.1" fill="none" stroke="#4a4c53" stroke-width="5.5" vector-effect="non-scaling-stroke" stroke-linejoin="round" stroke-linecap="round"/><polyline points="1657.6,158.0 1636.4,176.6 1625.8,203.1 1628.4,224.3 1647.0,245.6 1662.9,261.5 1665.6,277.4 1657.6,317.2 1641.7,365.0 1644.3,396.8 1662.9,418.0 1665.6,439.2 1644.3,455.2 1631.1,462.1" fill="none" stroke="#4a4c53" stroke-width="2.6" vector-effect="non-scaling-stroke" stroke-linejoin="round" stroke-linecap="round"/><polyline points="1670.9,158.0 1641.7,179.2 1631.1,205.8 1633.7,227.0 1649.6,242.9 1653.6,269.4 1647.0,290.7 1636.4,330.5 1633.7,370.3 1641.7,402.1 1657.6,412.7 1669.5,428.6 1668.2,462.1" fill="none" stroke="#4a4c53" stroke-width="2.6" vector-effect="non-scaling-stroke" stroke-linejoin="round" stroke-linecap="round"/><polyline points="1604.5,158.0 1615.1,179.2 1612.5,211.1 1617.8,232.3 1612.5,250.9 1607.2,277.4 1588.6,288.0 1586.0,317.2 1588.6,349.0 1604.5,370.3 1628.4,391.5 1623.1,423.3 1604.5,462.1" fill="none" stroke="#4a4c53" stroke-width="2.6" vector-effect="non-scaling-stroke" stroke-linejoin="round" stroke-linecap="round"/><polyline points="1578.0,354.3 1591.3,349.0 1604.5,351.7" fill="none" stroke="#4a4c53" stroke-width="2.6" vector-effect="non-scaling-stroke" stroke-linejoin="round" stroke-linecap="round"/><polyline points="1578.0,173.9 1593.9,176.6 1607.2,181.9 1620.5,184.5 1628.4,179.2" fill="none" stroke="#4a4c53" stroke-width="2.6" vector-effect="non-scaling-stroke" stroke-linejoin="round" stroke-linecap="round"/><polyline points="1586.0,158.0 1593.9,173.9 1615.1,189.8" fill="none" stroke="#4a4c53" stroke-width="2.6" vector-effect="non-scaling-stroke" stroke-linejoin="round" stroke-linecap="round"/><polyline points="1615.1,232.3 1631.1,237.6" fill="none" stroke="#4a4c53" stroke-width="2.6" vector-effect="non-scaling-stroke" stroke-linejoin="round" stroke-linecap="round"/><polyline points="1686.8,158.0 1689.4,179.2 1694.7,184.5 1700.0,173.9 1700.0,158.0" fill="none" stroke="#4a4c53" stroke-width="2.6" vector-effect="non-scaling-stroke" stroke-linejoin="round" stroke-linecap="round"/><polyline points="1634.0,380.0 1638.2,405.1 1646.6,413.5 1663.4,421.9 1667.5,434.5 1659.2,449.1 1642.4,463.8 1629.8,470.1 1617.3,468.0 1604.7,463.8 1592.1,461.7 1579.6,468.0 1569.1,480.5 1564.9,497.3 1567.0,522.4 1573.3,539.2 1583.8,530.8 1596.3,535.0 1617.3,543.4 1650.8,562.2 1667.5,564.3" fill="none" stroke="#4a4c53" stroke-width="2.8" vector-effect="non-scaling-stroke" stroke-linejoin="round" stroke-linecap="round"/><polyline points="1642.4,380.0 1646.6,400.9 1665.4,417.7 1671.7,434.5 1665.4,451.2 1646.6,470.1 1629.8,476.3 1617.3,472.1 1598.4,461.7" fill="none" stroke="#4a4c53" stroke-width="2.8" vector-effect="non-scaling-stroke" stroke-linejoin="round" stroke-linecap="round"/><polyline points="1567.0,380.0 1567.0,388.4 1541.9,380.0" fill="none" stroke="#4a4c53" stroke-width="2.8" vector-effect="non-scaling-stroke" stroke-linejoin="round" stroke-linecap="round"/><polyline points="1541.9,380.0 1546.1,398.8 1560.7,455.4 1567.0,476.3 1575.4,526.6 1588.0,553.8 1604.7,620.0" fill="none" stroke="#4a4c53" stroke-width="2.8" vector-effect="non-scaling-stroke" stroke-linejoin="round" stroke-linecap="round"/><polyline points="1500.0,390.5 1516.8,384.2 1525.1,392.6 1548.2,380.0" fill="none" stroke="#4a4c53" stroke-width="2.8" vector-effect="non-scaling-stroke" stroke-linejoin="round" stroke-linecap="round"/><polyline points="1625.7,380.0 1625.7,394.7 1613.1,421.9 1596.3,447.0" fill="none" stroke="#4a4c53" stroke-width="2.8" vector-effect="non-scaling-stroke" stroke-linejoin="round" stroke-linecap="round"/><polyline points="1608.9,380.0 1608.9,392.6 1594.2,447.0" fill="none" stroke="#4a4c53" stroke-width="2.8" vector-effect="non-scaling-stroke" stroke-linejoin="round" stroke-linecap="round"/><polyline points="1500.0,530.8 1562.8,526.6" fill="none" stroke="#4a4c53" stroke-width="2.8" vector-effect="non-scaling-stroke" stroke-linejoin="round" stroke-linecap="round"/><polyline points="1500.0,564.3 1548.2,551.7 1567.0,539.2" fill="none" stroke="#4a4c53" stroke-width="2.8" vector-effect="non-scaling-stroke" stroke-linejoin="round" stroke-linecap="round"/><polyline points="1500.0,589.4 1537.7,574.8 1567.0,560.1" fill="none" stroke="#4a4c53" stroke-width="2.8" vector-effect="non-scaling-stroke" stroke-linejoin="round" stroke-linecap="round"/><polyline points="1562.8,459.6 1550.3,474.2 1546.1,505.7 1546.1,555.9" fill="none" stroke="#4a4c53" stroke-width="2.8" vector-effect="non-scaling-stroke" stroke-linejoin="round" stroke-linecap="round"/><polyline points="1579.6,530.8 1604.7,593.6 1608.9,620.0" fill="none" stroke="#4a4c53" stroke-width="2.8" vector-effect="non-scaling-stroke" stroke-linejoin="round" stroke-linecap="round"/><polyline points="1625.7,549.6 1604.7,585.2 1608.9,620.0" fill="none" stroke="#4a4c53" stroke-width="2.8" vector-effect="non-scaling-stroke" stroke-linejoin="round" stroke-linecap="round"/><polyline points="1665.4,566.4 1694.8,539.2 1719.9,516.1 1730.4,516.1 1740.8,505.7 1730.4,497.3 1749.2,470.1 1763.9,470.1 1742.9,516.1 1734.6,522.4" fill="none" stroke="#4a4c53" stroke-width="2.8" vector-effect="non-scaling-stroke" stroke-linejoin="round" stroke-linecap="round"/><polyline points="1667.5,564.3 1696.9,579.0 1713.6,581.0 1713.6,591.5 1705.2,589.4 1696.9,579.0" fill="none" stroke="#4a4c53" stroke-width="2.8" vector-effect="non-scaling-stroke" stroke-linejoin="round" stroke-linecap="round"/><polyline points="1692.7,545.4 1696.9,576.9" fill="none" stroke="#4a4c53" stroke-width="2.8" vector-effect="non-scaling-stroke" stroke-linejoin="round" stroke-linecap="round"/><polyline points="917.9,462.0 907.2,483.2 891.3,501.8 880.7,496.5 870.1,501.8 864.8,515.1 851.5,531.0 843.6,528.3 842.2,544.2 856.8,549.6 880.7,541.6 882.0,545.6 864.8,552.2 838.3,573.4 827.6,578.7 817.0,584.0 811.7,592.0 817.0,594.7 795.8,597.3 779.9,606.6 785.2,609.3 806.4,605.3 817.0,611.9 819.7,615.9 811.7,618.5 803.8,610.6 785.2,623.8 769.3,639.8 750.7,638.4 729.5,653.0 710.9,674.3 700.3,692.8 689.7,706.1 689.7,716.7 681.7,727.3 671.1,732.6 657.8,737.9 652.5,748.5 639.3,766.1" fill="none" stroke="#4a4c53" stroke-width="2.8" vector-effect="non-scaling-stroke" stroke-linejoin="round" stroke-linecap="round"/><polyline points="912.5,462.0 901.9,488.5 888.7,503.1" fill="none" stroke="#4a4c53" stroke-width="2.8" vector-effect="non-scaling-stroke" stroke-linejoin="round" stroke-linecap="round"/><polyline points="671.1,732.6 676.4,745.9 663.1,753.9 663.1,766.1" fill="none" stroke="#4a4c53" stroke-width="2.8" vector-effect="non-scaling-stroke" stroke-linejoin="round" stroke-linecap="round"/><polyline points="1379.3,462.0 1375.3,509.8 1367.3,581.4 1363.3,621.2 1367.3,647.7" fill="none" stroke="#4a4c53" stroke-width="5.5" vector-effect="non-scaling-stroke" stroke-linejoin="round" stroke-linecap="round"/><polyline points="1367.3,647.7 1367.3,663.6 1372.6,700.8 1340.8,737.9 1327.5,753.9 1330.2,766.1" fill="none" stroke="#4a4c53" stroke-width="2.8" vector-effect="non-scaling-stroke" stroke-linejoin="round" stroke-linecap="round"/><polyline points="1375.3,634.5 1379.3,695.5" fill="none" stroke="#4a4c53" stroke-width="2.8" vector-effect="non-scaling-stroke" stroke-linejoin="round" stroke-linecap="round"/><polyline points="1226.7,695.5 1261.2,669.0 1287.7,658.3 1314.3,653.0 1340.8,653.0 1362.0,647.7 1367.3,637.1 1393.9,626.5 1409.8,618.5 1433.7,615.9 1481.4,610.6 1537.1,594.7 1578.0,581.4" fill="none" stroke="#4a4c53" stroke-width="2.8" vector-effect="non-scaling-stroke" stroke-linejoin="round" stroke-linecap="round"/><polyline points="1261.2,674.3 1293.0,663.6 1322.2,663.6 1354.1,661.0 1362.0,658.3" fill="none" stroke="#4a4c53" stroke-width="2.8" vector-effect="non-scaling-stroke" stroke-linejoin="round" stroke-linecap="round"/><polyline points="1274.5,647.7 1322.2,642.4 1362.0,637.1" fill="none" stroke="#4a4c53" stroke-width="2.8" vector-effect="non-scaling-stroke" stroke-linejoin="round" stroke-linecap="round"/><polyline points="1245.3,669.0 1274.5,647.7" fill="none" stroke="#4a4c53" stroke-width="2.8" vector-effect="non-scaling-stroke" stroke-linejoin="round" stroke-linecap="round"/><polyline points="1171.0,766.1 1226.7,695.5 1242.6,700.8 1245.3,766.1" fill="none" stroke="#4a4c53" stroke-width="2.8" vector-effect="non-scaling-stroke" stroke-linejoin="round" stroke-linecap="round"/><polyline points="1404.5,621.2 1420.4,600.0 1433.7,562.8 1446.9,549.6 1484.1,536.3 1526.5,531.0 1561.0,525.7 1578.0,523.0" fill="none" stroke="#4a4c53" stroke-width="2.8" vector-effect="non-scaling-stroke" stroke-linejoin="round" stroke-linecap="round"/><polyline points="1409.8,610.6 1446.9,594.7 1486.7,578.7 1526.5,562.8 1563.7,538.9 1578.0,536.3" fill="none" stroke="#4a4c53" stroke-width="2.8" vector-effect="non-scaling-stroke" stroke-linejoin="round" stroke-linecap="round"/><polyline points="1454.9,549.6 1473.5,589.4 1484.1,621.2 1486.7,642.4 1478.8,669.0 1465.5,679.6" fill="none" stroke="#4a4c53" stroke-width="2.8" vector-effect="non-scaling-stroke" stroke-linejoin="round" stroke-linecap="round"/><polyline points="1484.1,538.9 1500.0,607.9" fill="none" stroke="#4a4c53" stroke-width="2.8" vector-effect="non-scaling-stroke" stroke-linejoin="round" stroke-linecap="round"/><polyline points="1547.7,472.6 1547.7,552.2 1563.7,541.6" fill="none" stroke="#4a4c53" stroke-width="2.8" vector-effect="non-scaling-stroke" stroke-linejoin="round" stroke-linecap="round"/><polyline points="1566.3,462.0 1563.7,488.5 1569.0,525.7 1578.0,546.9" fill="none" stroke="#4a4c53" stroke-width="2.8" vector-effect="non-scaling-stroke" stroke-linejoin="round" stroke-linecap="round"/><polyline points="1640.0,685.4 1604.2,705.8 1554.3,739.8 1527.0,771.6 1506.6,803.3 1495.3,832.8 1495.3,855.5 1502.1,889.5" fill="none" stroke="#4a4c53" stroke-width="2.8" vector-effect="non-scaling-stroke" stroke-linejoin="round" stroke-linecap="round"/><polyline points="1626.9,653.6 1572.4,703.5 1527.0,735.3 1499.8,758.0 1486.2,780.7 1483.9,821.5 1486.2,866.9 1490.7,900.0" fill="none" stroke="#4a4c53" stroke-width="2.8" vector-effect="non-scaling-stroke" stroke-linejoin="round" stroke-linecap="round"/><polyline points="1622.3,653.6 1581.5,678.6 1531.6,703.5 1490.7,728.5 1474.9,758.0 1459.0,789.7 1465.8,812.4 1468.1,844.2 1474.9,866.9 1481.7,900.0" fill="none" stroke="#4a4c53" stroke-width="2.8" vector-effect="non-scaling-stroke" stroke-linejoin="round" stroke-linecap="round"/><polyline points="1486.2,640.0 1477.1,669.5 1463.5,680.8 1495.3,721.7 1527.0,758.0" fill="none" stroke="#4a4c53" stroke-width="2.8" vector-effect="non-scaling-stroke" stroke-linejoin="round" stroke-linecap="round"/><polyline points="1483.9,674.0 1527.0,708.1 1549.7,735.3" fill="none" stroke="#4a4c53" stroke-width="2.8" vector-effect="non-scaling-stroke" stroke-linejoin="round" stroke-linecap="round"/><polyline points="1617.8,640.0 1640.0,680.8" fill="none" stroke="#4a4c53" stroke-width="2.8" vector-effect="non-scaling-stroke" stroke-linejoin="round" stroke-linecap="round"/><polyline points="1400.0,796.5 1434.0,798.8 1454.4,796.5 1463.5,787.5 1504.4,789.7" fill="none" stroke="#4a4c53" stroke-width="2.8" vector-effect="non-scaling-stroke" stroke-linejoin="round" stroke-linecap="round"/><polyline points="1415.9,794.3 1468.1,805.6 1495.3,812.4" fill="none" stroke="#4a4c53" stroke-width="2.8" vector-effect="non-scaling-stroke" stroke-linejoin="round" stroke-linecap="round"/><polyline points="1400.0,873.7 1445.4,875.9 1459.0,864.6 1495.3,855.5" fill="none" stroke="#4a4c53" stroke-width="2.8" vector-effect="non-scaling-stroke" stroke-linejoin="round" stroke-linecap="round"/><polyline points="1400.0,885.0 1468.1,885.0 1495.3,880.5" fill="none" stroke="#4a4c53" stroke-width="2.8" vector-effect="non-scaling-stroke" stroke-linejoin="round" stroke-linecap="round"/><polyline points="1422.7,900.0 1499.8,887.3" fill="none" stroke="#4a4c53" stroke-width="2.8" vector-effect="non-scaling-stroke" stroke-linejoin="round" stroke-linecap="round"/><polyline points="1227.7,697.6 1245.0,707.2 1244.0,755.2 1231.5,797.4 1239.2,816.6 1269.9,833.9 1342.9,835.8 1404.3,816.6 1413.9,805.1 1413.9,782.1 1404.3,774.4 1377.4,757.1 1371.7,756.1 1354.4,762.9 1337.1,774.4 1327.5,755.2 1371.7,703.4 1379.3,695.7 1375.5,640.0" fill="none" stroke="#4a4c53" stroke-width="2.8" vector-effect="non-scaling-stroke" stroke-linejoin="round" stroke-linecap="round"/><polyline points="1245.0,707.2 1258.4,684.2 1296.8,659.2 1321.7,663.0 1358.2,661.1 1365.9,651.5 1365.9,640.0" fill="none" stroke="#4a4c53" stroke-width="2.8" vector-effect="non-scaling-stroke" stroke-linejoin="round" stroke-linecap="round"/><polyline points="1293.0,658.2 1300.6,653.4 1354.4,651.5 1362.1,643.8" fill="none" stroke="#4a4c53" stroke-width="2.8" vector-effect="non-scaling-stroke" stroke-linejoin="round" stroke-linecap="round"/><polyline points="1220.0,707.2 1245.0,680.3 1268.0,649.6 1285.3,647.7 1335.2,641.9 1364.0,640.0" fill="none" stroke="#4a4c53" stroke-width="2.8" vector-effect="non-scaling-stroke" stroke-linejoin="round" stroke-linecap="round"/><polyline points="1220.0,803.2 1231.5,797.4" fill="none" stroke="#4a4c53" stroke-width="2.8" vector-effect="non-scaling-stroke" stroke-linejoin="round" stroke-linecap="round"/><polyline points="1413.9,793.6 1440.0,799.3" fill="none" stroke="#4a4c53" stroke-width="2.8" vector-effect="non-scaling-stroke" stroke-linejoin="round" stroke-linecap="round"/><polyline points="1264.2,860.0 1271.8,833.9" fill="none" stroke="#4a4c53" stroke-width="2.8" vector-effect="non-scaling-stroke" stroke-linejoin="round" stroke-linecap="round"/><polyline points="1277.6,860.0 1282.4,833.9" fill="none" stroke="#4a4c53" stroke-width="2.8" vector-effect="non-scaling-stroke" stroke-linejoin="round" stroke-linecap="round"/><polyline points="1239.2,860.0 1237.3,818.5" fill="none" stroke="#4a4c53" stroke-width="2.8" vector-effect="non-scaling-stroke" stroke-linejoin="round" stroke-linecap="round"/><polyline points="1220.0,682.2 1258.4,674.6 1269.9,670.7" fill="none" stroke="#4a4c53" stroke-width="2.8" vector-effect="non-scaling-stroke" stroke-linejoin="round" stroke-linecap="round"/><polyline points="1220.0,822.4 1237.3,818.5" fill="none" stroke="#4a4c53" stroke-width="2.8" vector-effect="non-scaling-stroke" stroke-linejoin="round" stroke-linecap="round"/><polyline points="692.5,1070.9 737.8,1026.8 772.4,1016.1 852.2,989.5 918.7,954.9 945.3,949.6 985.2,949.6 1011.8,936.3 1038.5,904.4 1057.1,867.1 1078.4,848.5 1102.1,835.2" fill="none" stroke="#4a4c53" stroke-width="2.8" vector-effect="non-scaling-stroke" stroke-linejoin="round" stroke-linecap="round"/><polyline points="700.5,1070.9 743.1,1024.1 780.3,1014.8 854.8,992.2 924.0,957.6 945.3,952.3" fill="none" stroke="#4a4c53" stroke-width="2.8" vector-effect="non-scaling-stroke" stroke-linejoin="round" stroke-linecap="round"/><polyline points="745.7,1034.8 796.3,1021.5 865.5,1013.5 905.4,1012.1 945.3,1014.8 971.9,1018.8 987.9,1030.8 1006.5,1030.8 1035.8,1021.5 1051.8,1005.5 1078.4,986.9 1094.3,968.2 1102.1,941.6" fill="none" stroke="#4a4c53" stroke-width="2.8" vector-effect="non-scaling-stroke" stroke-linejoin="round" stroke-linecap="round"/><polyline points="854.8,994.8 865.5,1013.5" fill="none" stroke="#4a4c53" stroke-width="2.8" vector-effect="non-scaling-stroke" stroke-linejoin="round" stroke-linecap="round"/><polyline points="892.1,1008.2 921.4,968.2 918.7,954.9" fill="none" stroke="#4a4c53" stroke-width="2.8" vector-effect="non-scaling-stroke" stroke-linejoin="round" stroke-linecap="round"/><polyline points="663.3,766.0 673.9,774.0 692.5,789.9 695.2,805.9 711.2,819.2 719.1,837.8 713.8,859.1 732.4,861.8 748.4,859.1 759.0,872.4 775.0,912.4 777.7,916.3 772.4,915.0 745.7,885.7 735.1,912.4 732.4,939.0 732.4,952.3 716.5,965.6 732.4,970.9 740.4,976.2 759.0,973.6 769.7,984.2 764.4,992.2 775.0,1016.1" fill="none" stroke="#4a4c53" stroke-width="2.8" vector-effect="non-scaling-stroke" stroke-linejoin="round" stroke-linecap="round"/><polyline points="1022.5,869.8 1025.1,859.1 1038.5,848.5 1057.1,851.2 1041.1,867.1 1022.5,869.8" fill="none" stroke="#4a4c53" stroke-width="2.8" vector-effect="non-scaling-stroke" stroke-linejoin="round" stroke-linecap="round"/><polyline points="1102.0,837.8 1128.6,824.5 1165.9,813.9 1227.1,800.6 1240.4,766.0" fill="none" stroke="#4a4c53" stroke-width="2.8" vector-effect="non-scaling-stroke" stroke-linejoin="round" stroke-linecap="round"/><polyline points="1165.9,766.0 1163.2,776.6 1128.6,800.6 1102.0,808.6" fill="none" stroke="#4a4c53" stroke-width="2.8" vector-effect="non-scaling-stroke" stroke-linejoin="round" stroke-linecap="round"/><polyline points="1163.2,776.6 1160.5,845.8 1136.6,880.4 1136.6,896.4 1152.6,917.7 1149.9,925.7" fill="none" stroke="#4a4c53" stroke-width="2.8" vector-effect="non-scaling-stroke" stroke-linejoin="round" stroke-linecap="round"/><polyline points="1165.9,779.3 1187.2,835.2 1197.8,893.7" fill="none" stroke="#4a4c53" stroke-width="2.8" vector-effect="non-scaling-stroke" stroke-linejoin="round" stroke-linecap="round"/><polyline points="1227.1,800.6 1240.4,819.2 1272.3,835.2 1341.5,836.5 1394.7,816.6 1410.7,808.6" fill="none" stroke="#4a4c53" stroke-width="2.8" vector-effect="non-scaling-stroke" stroke-linejoin="round" stroke-linecap="round"/><polyline points="1139.3,891.1 1181.8,877.8 1240.4,867.1 1288.3,867.1 1368.1,872.4 1447.9,875.1 1458.6,864.5 1487.8,851.2" fill="none" stroke="#4a4c53" stroke-width="2.8" vector-effect="non-scaling-stroke" stroke-linejoin="round" stroke-linecap="round"/><polyline points="1144.6,904.4 1197.8,893.7 1277.6,888.4 1368.1,893.7 1421.3,897.7 1453.3,907.0" fill="none" stroke="#4a4c53" stroke-width="2.8" vector-effect="non-scaling-stroke" stroke-linejoin="round" stroke-linecap="round"/><polyline points="1421.3,897.7 1447.9,888.4 1487.8,877.8 1498.5,872.4" fill="none" stroke="#4a4c53" stroke-width="2.8" vector-effect="non-scaling-stroke" stroke-linejoin="round" stroke-linecap="round"/><polyline points="1432.0,901.7 1487.8,885.7 1501.1,883.1" fill="none" stroke="#4a4c53" stroke-width="2.8" vector-effect="non-scaling-stroke" stroke-linejoin="round" stroke-linecap="round"/><polyline points="1237.7,819.2 1240.4,845.8 1245.7,891.1" fill="none" stroke="#4a4c53" stroke-width="2.8" vector-effect="non-scaling-stroke" stroke-linejoin="round" stroke-linecap="round"/><polyline points="1269.6,835.2 1256.3,891.1" fill="none" stroke="#4a4c53" stroke-width="2.8" vector-effect="non-scaling-stroke" stroke-linejoin="round" stroke-linecap="round"/><polyline points="1282.9,835.2 1261.7,891.1" fill="none" stroke="#4a4c53" stroke-width="2.8" vector-effect="non-scaling-stroke" stroke-linejoin="round" stroke-linecap="round"/><polyline points="1280.3,837.8 1280.3,888.4" fill="none" stroke="#4a4c53" stroke-width="2.8" vector-effect="non-scaling-stroke" stroke-linejoin="round" stroke-linecap="round"/><polyline points="1447.9,797.9 1463.9,803.3 1474.5,792.6 1469.2,766.0" fill="none" stroke="#4a4c53" stroke-width="2.8" vector-effect="non-scaling-stroke" stroke-linejoin="round" stroke-linecap="round"/><polyline points="1466.6,782.0 1469.2,819.2 1474.5,851.2 1485.2,896.4" fill="none" stroke="#4a4c53" stroke-width="2.8" vector-effect="non-scaling-stroke" stroke-linejoin="round" stroke-linecap="round"/><polyline points="1485.2,766.0 1485.2,824.5 1495.8,883.1" fill="none" stroke="#4a4c53" stroke-width="2.8" vector-effect="non-scaling-stroke" stroke-linejoin="round" stroke-linecap="round"/><text x="0" y="0" transform="translate(715 633.5)" font-family="Liberation Sans" font-size="11.5" fill="#7e9a6f" textLength="62" lengthAdjust="spacingAndGlyphs">Tijuca Forest</text><g transform="translate(1500 819) rotate(-54)"><text x="0" y="0" font-family="Liberation Sans" font-size="12" fill="#a9b3bc" stroke="#1b2832" stroke-width="3.6" paint-order="stroke" stroke-linejoin="round" textLength="98" lengthAdjust="spacingAndGlyphs">Avenida Atlântica</text></g></svg><div class="r" style="left:77px;top:53px;width:12px;height:12px;background:#6a6a6a;border-radius:50%;"></div><div class="r" style="left:97px;top:53px;width:12px;height:12px;background:#6a6a6a;border-radius:50%;"></div><div class="r" style="left:117px;top:53px;width:12px;height:12px;background:#6a6a6a;border-radius:50%;"></div><svg class="r" style="left:140px;top:45px" width="258" height="36" viewBox="0 0 258 36"><path d="M0 35 Q9 35 9 27 L9 9 Q9 1 17 1 L241 1 Q249 1 249 9 L249 27 Q249 35 258 35 L258 36 L0 36 Z" fill="#35363a"/></svg><svg class="r" style="left:161px;top:55px;" width="16" height="16" viewBox="0 0 16 16"><circle cx="8" cy="8" r="8" fill="#4264fb"/><path d="M4.3 11.8 Q4.3 7.6 5.8 5.8 A3.7 3.7 0 1 1 10.4 10.6 Q8 11.9 4.3 11.8 Z" fill="#2a2b2f" stroke="#2a2b2f" stroke-width="0.8" stroke-linejoin="round"/><path d="M8.6 4.9 L9.4 6.6 L11.1 7.4 L9.4 8.2 L8.6 9.9 L7.8 8.2 L6.1 7.4 L7.8 6.6 Z" fill="#4264fb"/></svg><div class="r" style="left:185px;top:52px;width:178px;height:22px;overflow:hidden;-webkit-mask-image:linear-gradient(90deg,#000 150px,transparent 176px);"><div class="t" style="left:0px;top:1.90px;line-height:18.20px;font-size:13px;color:#e8eaed;font-weight:normal;transform:scaleX(0.9900);">CicloMapa Dark (prod) | Mapbox Studio</div></div><svg class="r" style="left:368px;top:58px;" width="10" height="10" viewBox="0 0 10 10"><path d="M1 1 L9 9 M9 1 L1 9" stroke="#e8eaed" stroke-width="1.6"/></svg><svg class="r" style="left:404px;top:56px;" width="14" height="14" viewBox="0 0 14 14"><path d="M7 1 V13 M1 7 H13" stroke="#e8eaed" stroke-width="1.6"/></svg><svg class="r" style="left:2025px;top:55px;" width="15" height="15" viewBox="0 0 15 15"><circle cx="7.5" cy="7.5" r="7.5" fill="#dadce0"/><path d="M3.8 5.8 L11.2 5.8 L7.5 10.2 Z" fill="#35363a"/></svg><div class="r" style="left:56px;top:80px;width:1999px;height:37px;background:#35363a;"></div><svg class="r" style="left:70px;top:90px;" width="16" height="16" viewBox="0 0 16 16"><path d="M15 8 H2 M8 2 L2 8 L8 14" stroke="#e8eaed" stroke-width="1.8" fill="none"/></svg><svg class="r" style="left:102px;top:90px;" width="16" height="16" viewBox="0 0 16 16"><path d="M1 8 H14 M8 2 L14 8 L8 14" stroke="#8b8d90" stroke-width="1.8" fill="none"/></svg><svg class="r" style="left:134px;top:90px;" width="16" height="16" viewBox="0 0 16 16"><path d="M13.5 8 A5.5 5.5 0 1 1 11.5 3.8" stroke="#e8eaed" stroke-width="1.8" fill="none"/><path d="M9 1.5 L14.5 1.5 L14.5 7 Z" fill="#e8eaed"/></svg><div class="r" style="left:163px;top:83px;width:1753px;height:30px;background:#202124;border-radius:15px;box-shadow:inset 0 0 0 2px #58595d;"></div><svg class="r" style="left:177px;top:91px;" width="10" height="13" viewBox="0 0 10 13"><path d="M2.5 6 V4 A2.5 2.5 0 0 1 7.5 4 V6" stroke="#dfe1e5" stroke-width="1.5" fill="none"/><rect x="0.5" y="5.5" width="9" height="7" rx="1" fill="#dfe1e5"/></svg><div class="t" style="left:198.5px;top:87.80px;line-height:21.00px;font-size:15px;color:#e8eaed;font-weight:normal;transform:scaleX(0.9903);">studio.mapbox.com</div><div class="t" style="left:327.5px;top:87.80px;line-height:21.00px;font-size:15px;color:#9aa0a6;font-weight:normal;transform:scaleX(1.0175);">/styles/cmdalbem/ckgpww8gi2nk619kkl0zrlodm/edit/#12.63/-22.95812/-43.20686</div><svg class="r" style="left:1824px;top:91px;" width="17" height="14" viewBox="0 0 17 14"><path d="M2.5 10.5 V2 H13.5" fill="none" stroke="#c9ccd0" stroke-width="1.3"/><path d="M0.5 11.5 H10" stroke="#c9ccd0" stroke-width="1.6"/><rect x="11.2" y="4.8" width="4.3" height="7.2" rx="0.6" fill="none" stroke="#c9ccd0" stroke-width="1.3"/></svg><svg class="r" style="left:1857px;top:90px;" width="15" height="15" viewBox="0 0 15 15"><path d="M1 4 V1 H4 M11 1 H14 V4 M14 11 V14 H11 M4 14 H1 V11" fill="none" stroke="#c9ccd0" stroke-width="1.2"/><rect x="3.8" y="3.8" width="3" height="3" fill="#c9ccd0"/><rect x="8.2" y="3.8" width="3" height="3" fill="#c9ccd0"/><rect x="3.8" y="8.2" width="3" height="3" fill="#c9ccd0"/><rect x="8.2" y="8.2" width="3" height="3" fill="#c9ccd0"/></svg><svg class="r" style="left:1889px;top:90px;" width="16" height="16" viewBox="0 0 16 16"><path d="M8 1.5 L10 6 L14.8 6.3 L11.1 9.4 L12.3 14.2 L8 11.6 L3.7 14.2 L4.9 9.4 L1.2 6.3 L6 6 Z" fill="none" stroke="#c9ccd0" stroke-width="1.4" stroke-linejoin="round"/></svg><svg class="r" style="left:1928px;top:90px;" width="16" height="16" viewBox="0 0 16 16"><path d="M2 2 H14 V8 A6 6 0 0 1 2 8 Z" fill="none" stroke="#c9ccd0" stroke-width="1.6"/><path d="M5 6.5 L8 9.5 L11 6.5" fill="none" stroke="#c9ccd0" stroke-width="1.6"/></svg><svg class="r" style="left:1960px;top:90px;" width="16" height="16" viewBox="0 0 16 16"><path d="M2 4.5 H5.5 Q5 1 8 1 Q11 1 10.5 4.5 H13.5 V8 Q17 7.5 17 10.5 Q17 13.5 13.5 13 V15.5 H2 V12 Q5 12.5 5 10 Q5 7.5 2 8 Z" fill="#e8eaed"/></svg><svg class="r" style="left:1990px;top:88px;" width="22" height="22" viewBox="0 0 22 22"><circle cx="11" cy="11" r="11" fill="#2a2a2a"/><ellipse cx="11" cy="10" rx="4.6" ry="5.6" fill="#c9c9c9"/><path d="M5.5 7 Q6 2.5 11 2.5 Q16 2.5 16.5 7 L15.5 6 Q11 4.5 6.5 6 Z" fill="#1a1a1a"/><path d="M3 19 Q11 13 19 19 Q11 24 3 19 Z" fill="#bdbdbd"/><path d="M9 12.5 H13" stroke="#555" stroke-width="1"/></svg><svg class="r" style="left:2030px;top:90px;" width="5" height="16" viewBox="0 0 5 16"><circle cx="2.5" cy="2.5" r="1.7" fill="#c9ccd0"/><circle cx="2.5" cy="8" r="1.7" fill="#c9ccd0"/><circle cx="2.5" cy="13.5" r="1.7" fill="#c9ccd0"/></svg><div class="r" style="left:56px;top:116px;width:1999px;height:1px;background:#18191b;"></div><div class="r" style="left:56px;top:117px;width:1999px;height:42px;background:#23364d;"></div><svg class="r" style="left:69px;top:130px;" width="16" height="16" viewBox="0 0 16 16"><circle cx="8" cy="8" r="8" fill="#fff"/><path d="M4.3 11.8 Q4.3 7.6 5.8 5.8 A3.7 3.7 0 1 1 10.4 10.6 Q8 11.9 4.3 11.8 Z" fill="#23364d" stroke="#23364d" stroke-width="0.8" stroke-linejoin="round"/><path d="M8.6 4.9 L9.4 6.6 L11.1 7.4 L9.4 8.2 L8.6 9.9 L7.8 8.2 L6.1 7.4 L7.8 6.6 Z" fill="#fff"/></svg><div class="t" style="left:92px;top:128.20px;line-height:19.60px;font-size:14px;color:#fff;font-weight:bold;transform:scaleX(0.8485);">Styles</div><svg class="r" style="left:136px;top:133px;" width="7" height="10" viewBox="0 0 7 10"><path d="M1.5 1 L5.5 5 L1.5 9" stroke="#8a98a8" stroke-width="1.5" fill="none"/></svg><div class="t" style="left:151.6px;top:128.20px;line-height:19.60px;font-size:14px;color:#fff;font-weight:bold;transform:scaleX(0.8849);">CicloMapa Dark (p...</div><div class="t" style="left:277.6px;top:130.10px;line-height:16.80px;font-size:12px;color:#c8d0da;font-weight:normal;transform:scaleX(0.8477);">Edited a few seconds ago</div><div class="t m" style="left:1092.3px;top:130.30px;line-height:15.40px;font-size:11px;color:#c9d1d9;font-weight:normal;transform:scaleX(0.9017);">12.63 -22.958,-43.207</div><svg class="r" style="left:1231px;top:131px;" width="15" height="15" viewBox="0 0 15 15"><circle cx="7.5" cy="7.5" r="7.2" fill="#fff"/><path d="M5.3 5.8 A2.3 2.3 0 1 1 8.3 8 Q7.5 8.4 7.5 9.4" stroke="#23364d" stroke-width="1.7" fill="none"/><circle cx="7.5" cy="11.6" r="1" fill="#23364d"/></svg><div class="t" style="left:1251.5px;top:128.90px;line-height:18.20px;font-size:13px;color:#fff;font-weight:bold;transform:scaleX(0.9407);">Help</div><svg class="r" style="left:1295px;top:130px;" width="16" height="16" viewBox="0 0 16 16"><path d="M8 1 L15 4 V12 L8 15 L1 12 V4 Z" fill="#fff"/><path d="M3.3 5.5 L8 7.3 L12.7 5.5 V11 L8 12.8 L3.3 11 Z" fill="#23364d"/><path d="M8 7.3 V13" stroke="#fff" stroke-width="1.6"/></svg><div class="t" style="left:1315px;top:128.90px;line-height:18.20px;font-size:13px;color:#fff;font-weight:bold;transform:scaleX(0.9606);">3D properties</div><svg class="r" style="left:1413px;top:131px;" width="14" height="14" viewBox="0 0 14 14"><path d="M7 0.5 L9 3.6 L12.6 3.2 L11 6.5 L13 9.5 L9.4 9.8 L7 13 L5 9.8 L1.2 9.6 L3 6.5 L1.2 3.3 L5 3.6 Z" fill="#fff"/><circle cx="7" cy="6.8" r="2.6" fill="#23364d"/></svg><div class="t" style="left:1432px;top:128.90px;line-height:18.20px;font-size:13px;color:#fff;font-weight:bold;transform:scaleX(0.9319);">Light</div><svg class="r" style="left:1480px;top:131px;" width="13" height="14" viewBox="0 0 13 14"><path d="M0.5 2 H7.5 V4 H5 V12 H3 V4 H0.5 Z" fill="#fff"/><path d="M8 5.5 H12.5 V7.5 H11 V11 Q11 11.5 12.5 11.5 V13 Q9 13.3 9 11 V7.5 H8 Z M9 3.5 H11 V5.5 H9 Z" fill="#fff"/></svg><div class="t" style="left:1499px;top:128.90px;line-height:18.20px;font-size:13px;color:#fff;font-weight:bold;transform:scaleX(0.9044);">Fonts</div><svg class="r" style="left:1548px;top:132px;" width="13" height="12" viewBox="0 0 13 12"><rect x="0.5" y="0.5" width="12" height="11" rx="2" fill="#fff"/><rect x="2.3" y="2.5" width="8.4" height="6.5" fill="#23364d"/><circle cx="8" cy="5" r="1.6" fill="#fff"/><path d="M2.3 9 L5 6.5 L7 9 Z" fill="#fff"/></svg><div class="t" style="left:1567.6px;top:128.90px;line-height:18.20px;font-size:13px;color:#fff;font-weight:bold;transform:scaleX(0.9419);">Images</div><svg class="r" style="left:1626px;top:131px;" width="15" height="14" viewBox="0 0 15 14"><rect x="0.5" y="1" width="8" height="3" fill="#fff"/><rect x="0.5" y="5.5" width="8" height="3" fill="#fff"/><rect x="0.5" y="10" width="8" height="3" fill="#fff"/><path d="M10 2 Q14.5 2.5 14.2 7 Q14 11 10.5 12" stroke="#fff" stroke-width="1.8" fill="none"/><path d="M10 9.5 L10 13.5 L13 12 Z" fill="#fff"/></svg><div class="t" style="left:1646px;top:128.90px;line-height:18.20px;font-size:13px;color:#fff;font-weight:bold;transform:scaleX(0.9824);">History</div><svg class="r" style="left:1707px;top:131px;" width="15" height="15" viewBox="0 0 15 15"><path d="M7.5 0.5 L9 2.3 L11.4 1.6 L11.7 4 L14 4.8 L12.9 7 L14.3 9 L12 9.9 L11.7 12.4 L9.3 11.9 L7.5 13.8 L5.7 11.9 L3.3 12.4 L3 9.9 L0.7 9 L2.1 7 L1 4.8 L3.3 4 L3.6 1.6 L6 2.3 Z" fill="#fff"/><circle cx="7.5" cy="7.2" r="2.6" fill="#23364d"/></svg><div class="t" style="left:1726px;top:128.90px;line-height:18.20px;font-size:13px;color:#fff;font-weight:bold;transform:scaleX(0.9360);">Settings</div><svg class="r" style="left:1793px;top:130px;" width="15" height="16" viewBox="0 0 15 16"><rect x="3" y="0.5" width="9" height="4" fill="#fff"/><rect x="0.5" y="5" width="14" height="7" rx="1.5" fill="#fff"/><rect x="3" y="9" width="9" height="6.5" fill="#fff"/><rect x="4.8" y="10.8" width="5.4" height="1.2" fill="#23364d"/><rect x="4.8" y="13" width="5.4" height="1.2" fill="#23364d"/></svg><div class="t" style="left:1816px;top:128.90px;line-height:18.20px;font-size:13px;color:#fff;font-weight:bold;transform:scaleX(1.0131);">Print</div><div class="r" style="left:1858px;top:117px;width:1px;height:42px;background:#3a4d63;"></div><svg class="r" style="left:1873px;top:132px;" width="12" height="12" viewBox="0 0 12 12"><path d="M5 1.5 H1.5 V10.5 H10.5 V7" stroke="#fff" stroke-width="2" fill="none"/><path d="M4.5 7.5 L10 2" stroke="#fff" stroke-width="2"/><path d="M6.5 0.5 H11.5 V5.5 Z" fill="#fff"/></svg><div class="t" style="left:1895.6px;top:128.90px;line-height:18.20px;font-size:13px;color:#fff;font-weight:bold;transform:scaleX(0.9240);">Share...</div><div class="r" style="left:1952px;top:117px;width:1px;height:42px;background:#3a4d63;"></div><div class="r" style="left:1965px;top:126px;width:78px;height:24px;background:#4264fb;border-radius:4px;"></div><div class="t" style="left:1977px;top:128.90px;line-height:18.20px;font-size:13px;color:#fff;font-weight:bold;transform:scaleX(0.9172);">Publish...</div><div class="r" style="left:56px;top:159px;width:210px;height:913px;background:#ffffff;border-bottom-left-radius:10px;"></div><div class="r" style="left:266px;top:159px;width:1px;height:913px;background:#c8d4e2;"></div><div class="t" style="left:68.4px;top:165.50px;line-height:21.00px;font-size:15px;color:#5b7ca0;font-weight:bold;transform:scaleX(0.9775);">Components</div><div class="t" style="left:171.6px;top:165.50px;line-height:21.00px;font-size:15px;color:#1f3550;font-weight:bold;transform:scaleX(0.9097);">Layers</div><div class="r" style="left:222.5px;top:171.5px;width:9px;height:9px;background:#c5d1e0;border-radius:50%;"></div><div class="r" style="left:68px;top:194px;width:186px;height:1px;background:#c8d4e2;"></div><div class="r" style="left:171.6px;top:193px;width:44.1px;height:2px;background:#1f3550;"></div><div class="r" style="left:68px;top:201px;width:24px;height:24px;background:#5a7896;border-radius:3px;"></div><svg class="r" style="left:74px;top:207px;" width="12" height="12" viewBox="0 0 12 12"><path d="M6 1 V11 M1 6 H11" stroke="#fff" stroke-width="2.2"/></svg><svg class="r" style="left:100px;top:206px;" width="14" height="14" viewBox="0 0 14 14"><rect x="1.7" y="1.7" width="7" height="7" fill="none" stroke="#5a7896" stroke-width="1.6"/><rect x="5" y="5" width="8" height="8" fill="#5a7896" stroke="#fff" stroke-width="0.6"/></svg><svg class="r" style="left:125px;top:207px;" width="12" height="12" viewBox="0 0 12 12"><path d="M0.8 1.5 L5 6 M5 1.5 L0.8 6 M0.8 7 L5 11" stroke="#5a7896" stroke-width="1.3" fill="none"/><rect x="4" y="2" width="7" height="9" fill="#5a7896"/><path d="M5.5 4.5 H9.5" stroke="#fff" stroke-width="1"/></svg><svg class="r" style="left:147px;top:207px;" width="15" height="12" viewBox="0 0 15 12"><g fill="none" stroke="#5a7896" stroke-width="1.9" stroke-linecap="round"><path d="M1.6 8 Q1.3 3.2 7.2 2.2"/><path d="M4.6 10.8 L11 2.2"/><path d="M13.6 4.5 Q14.3 10 8.4 10.8"/></g></svg><svg class="r" style="left:173px;top:206px;" width="12" height="14" viewBox="0 0 12 14"><rect x="1.5" y="2.3" width="9" height="1.8" fill="#5a7896"/><path d="M4.2 2.3 V0.8 H7.8 V2.3" fill="none" stroke="#5a7896" stroke-width="1.2"/><rect x="2.3" y="5" width="7.4" height="8" fill="#5a7896"/></svg><div class="r" style="left:194px;top:196px;width:1px;height:34px;background:#d8e0ea;"></div><div class="t" style="left:201.5px;top:204.80px;line-height:15.40px;font-size:11px;color:#4e6b87;font-weight:bold;transform:scaleX(0.9321);">169/...</div><svg class="r" style="left:239px;top:206px;" width="12" height="13" viewBox="0 0 12 13"><path d="M0.5 1.5 H11 L7 6.2 V11.5 L5 10 V6.2 Z" fill="#5a7896"/><path d="M2.5 3 H9" stroke="#fff" stroke-width="0.8"/></svg><div class="r" style="left:56px;top:230px;width:210px;height:1px;background:#c8d4e2;"></div><div class="r" style="left:62px;top:882px;width:192px;height:23.5px;background:#c5d1e1;"></div><div class="r" style="left:92px;top:237.5px;width:15px;height:15px;background:#9d9d9d;border-radius:3px;"></div><svg class="r" style="left:113.5px;top:239px;" width="11" height="12" viewBox="0 0 11 12"><path d="M1.5 10.5 L9.5 1.5" stroke="#a3acb5" stroke-width="2.2" stroke-linecap="round"/></svg><div class="t" style="left:131.4px;top:236.60px;line-height:16.80px;font-size:12px;color:#a0a9b2;font-weight:normal;transform:scaleX(0.8689);">road-secondary-ter...</div><svg class="r" style="left:231.5px;top:239px;" width="15" height="12" viewBox="0 0 15 12"><g fill="none" stroke="#a3acb5" stroke-width="1.8" stroke-linecap="round"><path d="M1.6 7.4 Q1.2 3.2 6.8 2.4"/><path d="M4.3 10.2 L10.6 2.6"/><path d="M12.8 4.6 Q13.4 9.6 8.2 10.3"/></g></svg><div class="r" style="left:92px;top:262.5px;width:15px;height:15px;background:#9d9d9d;border-radius:3px;"></div><svg class="r" style="left:113.5px;top:264px;" width="11" height="12" viewBox="0 0 11 12"><path d="M1.5 10.5 L9.5 1.5" stroke="#a3acb5" stroke-width="2.2" stroke-linecap="round"/></svg><div class="t" style="left:131.4px;top:261.60px;line-height:16.80px;font-size:12px;color:#a0a9b2;font-weight:normal;transform:scaleX(0.8596);">road-street-case</div><svg class="r" style="left:231.5px;top:264px;" width="15" height="12" viewBox="0 0 15 12"><g fill="none" stroke="#a3acb5" stroke-width="1.8" stroke-linecap="round"><path d="M1.6 7.4 Q1.2 3.2 6.8 2.4"/><path d="M4.3 10.2 L10.6 2.6"/><path d="M12.8 4.6 Q13.4 9.6 8.2 10.3"/></g></svg><div class="r" style="left:92px;top:287.5px;width:15px;height:15px;background:#2d2e30;border-radius:3px;"></div><svg class="r" style="left:113.5px;top:289px;" width="11" height="12" viewBox="0 0 11 12"><path d="M1.5 10.5 L9.5 1.5" stroke="#273d56" stroke-width="2.2" stroke-linecap="round"/></svg><div class="t" style="left:131.4px;top:286.60px;line-height:16.80px;font-size:12px;color:#273d56;font-weight:normal;transform:scaleX(0.8670);">road-street_limited-case</div><div class="r" style="left:92px;top:312.5px;width:15px;height:15px;background:#47484b;border-radius:3px;"></div><svg class="r" style="left:113.5px;top:314px;" width="11" height="12" viewBox="0 0 11 12"><path d="M1.5 10.5 L9.5 1.5" stroke="#273d56" stroke-width="2.2" stroke-linecap="round"/></svg><div class="t" style="left:131.4px;top:311.60px;line-height:16.80px;font-size:12px;color:#273d56;font-weight:normal;transform:scaleX(0.8503);">road-service-track-case</div><div class="r" style="left:92px;top:337.5px;width:15px;height:15px;background:#47484b;border-radius:3px;"></div><svg class="r" style="left:113.5px;top:339px;" width="11" height="12" viewBox="0 0 11 12"><path d="M1.5 10.5 L9.5 1.5" stroke="#273d56" stroke-width="2.2" stroke-linecap="round"/></svg><div class="t" style="left:131.4px;top:336.60px;line-height:16.80px;font-size:12px;color:#273d56;font-weight:normal;transform:scaleX(0.8545);">road-link-case</div><div class="r" style="left:92px;top:362.5px;width:15px;height:15px;background:#000;border-radius:3px;"></div><svg class="r" style="left:94px;top:364.5px;" width="11" height="11" viewBox="0 0 11 11"><rect x="1" y="1" width="9" height="8" rx="1" fill="none" stroke="#fff" stroke-width="1.3"/><rect x="3" y="3.2" width="5" height="3.5" fill="#fff"/></svg><div class="t" style="left:114.5px;top:360.90px;line-height:18.20px;font-size:13px;color:#273d56;font-weight:bold;transform:scaleX(1.1334);">T</div><div class="t" style="left:131.4px;top:361.60px;line-height:16.80px;font-size:12px;color:#273d56;font-weight:normal;transform:scaleX(0.8962);">turning-features-outline</div><div class="r" style="left:68px;top:390.5px;width:15px;height:15px;background:#a9b3bd;border-radius:3px;"></div><svg class="r" style="left:89.5px;top:392px;" width="11" height="12" viewBox="0 0 11 12"><path d="M1.5 10.5 L9.5 1.5" stroke="#a3acb5" stroke-width="2.2" stroke-linecap="round"/></svg><div class="t" style="left:107px;top:389.60px;line-height:16.80px;font-size:12px;color:#a0a9b2;font-weight:normal;transform:scaleX(0.8847);">ferry_auto</div><svg class="r" style="left:231.5px;top:392px;" width="15" height="12" viewBox="0 0 15 12"><g fill="none" stroke="#a3acb5" stroke-width="1.8" stroke-linecap="round"><path d="M1.6 7.4 Q1.2 3.2 6.8 2.4"/><path d="M4.3 10.2 L10.6 2.6"/><path d="M12.8 4.6 Q13.4 9.6 8.2 10.3"/></g></svg><div class="r" style="left:68px;top:446.5px;width:15px;height:15px;background:#a0a0a0;border-radius:3px;"></div><svg class="r" style="left:89.5px;top:448px;" width="11" height="12" viewBox="0 0 11 12"><path d="M1.5 10.5 L9.5 1.5" stroke="#a3acb5" stroke-width="2.2" stroke-linecap="round"/></svg><div class="t" style="left:107px;top:445.60px;line-height:16.80px;font-size:12px;color:#a0a9b2;font-weight:normal;transform:scaleX(0.8948);">building-line</div><svg class="r" style="left:231.5px;top:448px;" width="15" height="12" viewBox="0 0 15 12"><g fill="none" stroke="#a3acb5" stroke-width="1.8" stroke-linecap="round"><path d="M1.6 7.4 Q1.2 3.2 6.8 2.4"/><path d="M4.3 10.2 L10.6 2.6"/><path d="M12.8 4.6 Q13.4 9.6 8.2 10.3"/></g></svg><div class="r" style="left:68px;top:471.5px;width:15px;height:15px;background:#9a9a9a;border-radius:3px;"></div><svg class="r" style="left:88.5px;top:474px;" width="13" height="10" viewBox="0 0 13 10"><path d="M3.5 1 H9.5 L12.5 9 H0.5 Z" fill="#a3acb5" stroke="#a3acb5" stroke-width="0.8" stroke-linejoin="round"/></svg><div class="t" style="left:107px;top:470.60px;line-height:16.80px;font-size:12px;color:#a0a9b2;font-weight:normal;transform:scaleX(0.8945);">building</div><svg class="r" style="left:231.5px;top:473px;" width="15" height="12" viewBox="0 0 15 12"><g fill="none" stroke="#a3acb5" stroke-width="1.8" stroke-linecap="round"><path d="M1.6 7.4 Q1.2 3.2 6.8 2.4"/><path d="M4.3 10.2 L10.6 2.6"/><path d="M12.8 4.6 Q13.4 9.6 8.2 10.3"/></g></svg><div class="r" style="left:68px;top:527.5px;width:15px;height:15px;background:#1e1c19;border-radius:3px;"></div><svg class="r" style="left:89.5px;top:529px;" width="11" height="12" viewBox="0 0 11 12"><path d="M1.5 10.5 L9.5 1.5" stroke="#273d56" stroke-width="2.2" stroke-linecap="round"/></svg><div class="t" style="left:107px;top:526.60px;line-height:16.80px;font-size:12px;color:#273d56;font-weight:normal;transform:scaleX(0.8822);">barrier_line-land-line</div><div class="r" style="left:68px;top:552.5px;width:15px;height:15px;background:#1e1c19;border-radius:3px;"></div><svg class="r" style="left:88.5px;top:555px;" width="13" height="10" viewBox="0 0 13 10"><path d="M3.5 1 H9.5 L12.5 9 H0.5 Z" fill="#273d56" stroke="#273d56" stroke-width="0.8" stroke-linejoin="round"/></svg><div class="t" style="left:107px;top:551.60px;line-height:16.80px;font-size:12px;color:#273d56;font-weight:normal;transform:scaleX(0.8829);">barrier_line-land-polygon</div><div class="r" style="left:68px;top:577.5px;width:15px;height:15px;background:#a3a5a8;border-radius:3px;"></div><svg class="r" style="left:89.5px;top:579px;" width="11" height="12" viewBox="0 0 11 12"><path d="M1.5 10.5 L9.5 1.5" stroke="#a3acb5" stroke-width="2.2" stroke-linecap="round"/></svg><div class="t" style="left:107px;top:576.60px;line-height:16.80px;font-size:12px;color:#a0a9b2;font-weight:normal;transform:scaleX(0.8824);">water-line</div><svg class="r" style="left:231.5px;top:579px;" width="15" height="12" viewBox="0 0 15 12"><g fill="none" stroke="#a3acb5" stroke-width="1.8" stroke-linecap="round"><path d="M1.6 7.4 Q1.2 3.2 6.8 2.4"/><path d="M4.3 10.2 L10.6 2.6"/><path d="M12.8 4.6 Q13.4 9.6 8.2 10.3"/></g></svg><div class="r" style="left:68px;top:602.5px;width:15px;height:15px;background:#141414;border-radius:3px;"></div><svg class="r" style="left:88.5px;top:605px;" width="13" height="10" viewBox="0 0 13 10"><path d="M3.5 1 H9.5 L12.5 9 H0.5 Z" fill="#273d56" stroke="#273d56" stroke-width="0.8" stroke-linejoin="round"/></svg><div class="t" style="left:107px;top:601.60px;line-height:16.80px;font-size:12px;color:#273d56;font-weight:normal;transform:scaleX(0.8929);">water</div><div class="r" style="left:68px;top:627.5px;width:15px;height:15px;background:#3e4f60;border-radius:3px;"></div><svg class="r" style="left:89.5px;top:629px;" width="11" height="12" viewBox="0 0 11 12"><path d="M1.5 10.5 L9.5 1.5" stroke="#273d56" stroke-width="2.2" stroke-linecap="round"/></svg><div class="t" style="left:107px;top:626.60px;line-height:16.80px;font-size:12px;color:#273d56;font-weight:normal;transform:scaleX(0.8769);">waterway-small</div><div class="r" style="left:68px;top:652.5px;width:15px;height:15px;background:#1b1d1d;border-radius:3px;"></div><svg class="r" style="left:89.5px;top:654px;" width="11" height="12" viewBox="0 0 11 12"><path d="M1.5 10.5 L9.5 1.5" stroke="#273d56" stroke-width="2.2" stroke-linecap="round"/></svg><div class="t" style="left:107px;top:651.60px;line-height:16.80px;font-size:12px;color:#273d56;font-weight:normal;transform:scaleX(0.8763);">waterway-river-canal</div><div class="r" style="left:68px;top:708.5px;width:15px;height:15px;background:#a6a8a3;border-radius:3px;"></div><svg class="r" style="left:88.5px;top:711px;" width="13" height="10" viewBox="0 0 13 10"><path d="M3.5 1 H9.5 L12.5 9 H0.5 Z" fill="#a3acb5" stroke="#a3acb5" stroke-width="0.8" stroke-linejoin="round"/></svg><div class="t" style="left:107px;top:707.60px;line-height:16.80px;font-size:12px;color:#a0a9b2;font-weight:normal;transform:scaleX(0.8720);">hillshade</div><svg class="r" style="left:231.5px;top:710px;" width="15" height="12" viewBox="0 0 15 12"><g fill="none" stroke="#a3acb5" stroke-width="1.8" stroke-linecap="round"><path d="M1.6 7.4 Q1.2 3.2 6.8 2.4"/><path d="M4.3 10.2 L10.6 2.6"/><path d="M12.8 4.6 Q13.4 9.6 8.2 10.3"/></g></svg><div class="r" style="left:92px;top:761.5px;width:15px;height:15px;background:#a8adb6;border-radius:3px;"></div><svg class="r" style="left:112.5px;top:764px;" width="13" height="10" viewBox="0 0 13 10"><path d="M3.5 1 H9.5 L12.5 9 H0.5 Z" fill="#a3acb5" stroke="#a3acb5" stroke-width="0.8" stroke-linejoin="round"/></svg><div class="t" style="left:131.4px;top:760.60px;line-height:16.80px;font-size:12px;color:#a0a9b2;font-weight:normal;transform:scaleX(0.8766);">parking</div><svg class="r" style="left:231.5px;top:763px;" width="15" height="12" viewBox="0 0 15 12"><g fill="none" stroke="#a3acb5" stroke-width="1.8" stroke-linecap="round"><path d="M1.6 7.4 Q1.2 3.2 6.8 2.4"/><path d="M4.3 10.2 L10.6 2.6"/><path d="M12.8 4.6 Q13.4 9.6 8.2 10.3"/></g></svg><div class="r" style="left:92px;top:786.5px;width:15px;height:15px;background:#a6a8ab;border-radius:3px;"></div><svg class="r" style="left:112.5px;top:789px;" width="13" height="10" viewBox="0 0 13 10"><path d="M3.5 1 H9.5 L12.5 9 H0.5 Z" fill="#a3acb5" stroke="#a3acb5" stroke-width="0.8" stroke-linejoin="round"/></svg><div class="t" style="left:131.4px;top:785.60px;line-height:16.80px;font-size:12px;color:#a0a9b2;font-weight:normal;transform:scaleX(0.9058);">industrial</div><svg class="r" style="left:231.5px;top:788px;" width="15" height="12" viewBox="0 0 15 12"><g fill="none" stroke="#a3acb5" stroke-width="1.8" stroke-linecap="round"><path d="M1.6 7.4 Q1.2 3.2 6.8 2.4"/><path d="M4.3 10.2 L10.6 2.6"/><path d="M12.8 4.6 Q13.4 9.6 8.2 10.3"/></g></svg><div class="r" style="left:92px;top:811.5px;width:15px;height:15px;background:#a4aaa6;border-radius:3px;"></div><svg class="r" style="left:112.5px;top:814px;" width="13" height="10" viewBox="0 0 13 10"><path d="M3.5 1 H9.5 L12.5 9 H0.5 Z" fill="#a3acb5" stroke="#a3acb5" stroke-width="0.8" stroke-linejoin="round"/></svg><div class="t" style="left:131.4px;top:810.60px;line-height:16.80px;font-size:12px;color:#a0a9b2;font-weight:normal;transform:scaleX(0.8693);">cemetery</div><svg class="r" style="left:231.5px;top:813px;" width="15" height="12" viewBox="0 0 15 12"><g fill="none" stroke="#a3acb5" stroke-width="1.8" stroke-linecap="round"><path d="M1.6 7.4 Q1.2 3.2 6.8 2.4"/><path d="M4.3 10.2 L10.6 2.6"/><path d="M12.8 4.6 Q13.4 9.6 8.2 10.3"/></g></svg><div class="r" style="left:92px;top:836.5px;width:15px;height:15px;background:#a8aeab;border-radius:3px;"></div><svg class="r" style="left:112.5px;top:839px;" width="13" height="10" viewBox="0 0 13 10"><path d="M3.5 1 H9.5 L12.5 9 H0.5 Z" fill="#a3acb5" stroke="#a3acb5" stroke-width="0.8" stroke-linejoin="round"/></svg><div class="t" style="left:131.4px;top:835.60px;line-height:16.80px;font-size:12px;color:#a0a9b2;font-weight:normal;transform:scaleX(0.8837);">pitch</div><svg class="r" style="left:231.5px;top:838px;" width="15" height="12" viewBox="0 0 15 12"><g fill="none" stroke="#a3acb5" stroke-width="1.8" stroke-linecap="round"><path d="M1.6 7.4 Q1.2 3.2 6.8 2.4"/><path d="M4.3 10.2 L10.6 2.6"/><path d="M12.8 4.6 Q13.4 9.6 8.2 10.3"/></g></svg><div class="r" style="left:92px;top:861.5px;width:15px;height:15px;background:#232b1d;border-radius:3px;"></div><svg class="r" style="left:112.5px;top:864px;" width="13" height="10" viewBox="0 0 13 10"><path d="M3.5 1 H9.5 L12.5 9 H0.5 Z" fill="#273d56" stroke="#273d56" stroke-width="0.8" stroke-linejoin="round"/></svg><div class="t" style="left:131.4px;top:860.60px;line-height:16.80px;font-size:12px;color:#273d56;font-weight:normal;transform:scaleX(0.8696);">park</div><div class="r" style="left:92px;top:886.5px;width:15px;height:15px;background:#232b1d;border-radius:3px;"></div><svg class="r" style="left:112.5px;top:889px;" width="13" height="10" viewBox="0 0 13 10"><path d="M3.5 1 H9.5 L12.5 9 H0.5 Z" fill="#273d56" stroke="#273d56" stroke-width="0.8" stroke-linejoin="round"/></svg><div class="t" style="left:131.4px;top:885.60px;line-height:16.80px;font-size:12px;color:#273d56;font-weight:normal;transform:scaleX(0.8758);">national_park</div><div class="r" style="left:92px;top:911.5px;width:15px;height:15px;background:#a8adad;border-radius:3px;"></div><svg class="r" style="left:112.5px;top:914px;" width="13" height="10" viewBox="0 0 13 10"><path d="M3.5 1 H9.5 L12.5 9 H0.5 Z" fill="#a3acb5" stroke="#a3acb5" stroke-width="0.8" stroke-linejoin="round"/></svg><div class="t" style="left:131.4px;top:910.60px;line-height:16.80px;font-size:12px;color:#a0a9b2;font-weight:normal;transform:scaleX(0.8922);">hospital</div><svg class="r" style="left:231.5px;top:913px;" width="15" height="12" viewBox="0 0 15 12"><g fill="none" stroke="#a3acb5" stroke-width="1.8" stroke-linecap="round"><path d="M1.6 7.4 Q1.2 3.2 6.8 2.4"/><path d="M4.3 10.2 L10.6 2.6"/><path d="M12.8 4.6 Q13.4 9.6 8.2 10.3"/></g></svg><div class="r" style="left:92px;top:936.5px;width:15px;height:15px;background:#9ea1a4;border-radius:3px;"></div><svg class="r" style="left:112.5px;top:939px;" width="13" height="10" viewBox="0 0 13 10"><path d="M3.5 1 H9.5 L12.5 9 H0.5 Z" fill="#a3acb5" stroke="#a3acb5" stroke-width="0.8" stroke-linejoin="round"/></svg><div class="t" style="left:131.4px;top:935.60px;line-height:16.80px;font-size:12px;color:#a0a9b2;font-weight:normal;transform:scaleX(0.8649);">school</div><svg class="r" style="left:231.5px;top:938px;" width="15" height="12" viewBox="0 0 15 12"><g fill="none" stroke="#a3acb5" stroke-width="1.8" stroke-linecap="round"><path d="M1.6 7.4 Q1.2 3.2 6.8 2.4"/><path d="M4.3 10.2 L10.6 2.6"/><path d="M12.8 4.6 Q13.4 9.6 8.2 10.3"/></g></svg><div class="r" style="left:68px;top:992.5px;width:15px;height:15px;background:#1e1c19;border-radius:3px;"></div><svg class="r" style="left:89.0px;top:994px;" width="13" height="13" viewBox="0 0 13 13"><circle cx="6.5" cy="6.5" r="5.5" fill="none" stroke="#273d56" stroke-width="1.8"/><path d="M2 4 Q5 3 6 6 Q7 9 10 9.5 L11 7 Q11.5 11 6.5 12 Q1.5 11 1.2 6.5 Z" fill="#273d56"/></svg><div class="t" style="left:107px;top:991.60px;line-height:16.80px;font-size:12px;color:#273d56;font-weight:normal;transform:scaleX(0.8770);">background</div><svg class="r" style="left:72px;top:422px;" width="5" height="8" viewBox="0 0 5 8"><path d="M0.5 0.5 V7.5 L4.5 4 Z" fill="#273d56"/></svg><svg class="r" style="left:87px;top:421px;" width="10" height="10" viewBox="0 0 10 10"><path d="M0.5 1.5 H4 L5 2.8 H9.5 V9.5 H0.5 Z" fill="#273d56"/><path d="M0.5 3.8 H9.5" stroke="#fff" stroke-width="0.8"/></svg><div class="t" style="left:101px;top:417.60px;line-height:16.80px;font-size:12px;color:#273d56;font-weight:normal;transform:scaleX(0.8522);">Tunnels</div><div class="t" style="left:143px;top:418.30px;line-height:15.40px;font-size:11px;color:#273d56;font-weight:normal;font-style:italic;transform:scaleX(0.8962);">23 layers</div><svg class="r" style="left:72px;top:503px;" width="5" height="8" viewBox="0 0 5 8"><path d="M0.5 0.5 V7.5 L4.5 4 Z" fill="#a3acb5"/></svg><svg class="r" style="left:87px;top:502px;" width="10" height="10" viewBox="0 0 10 10"><path d="M0.5 1.5 H4 L5 2.8 H9.5 V9.5 H0.5 Z" fill="#a3acb5"/><path d="M0.5 3.8 H9.5" stroke="#fff" stroke-width="0.8"/></svg><div class="t" style="left:101px;top:498.60px;line-height:16.80px;font-size:12px;color:#a0a9b2;font-weight:normal;transform:scaleX(0.8408);">Aeroways</div><div class="t" style="left:152px;top:499.30px;line-height:15.40px;font-size:11px;color:#a0a9b2;font-weight:normal;font-style:italic;transform:scaleX(0.8698);">3 layers</div><svg class="r" style="left:234.5px;top:501px;" width="15" height="12" viewBox="0 0 15 12"><g fill="none" stroke="#a3acb5" stroke-width="1.8" stroke-linecap="round"><path d="M1.6 7.4 Q1.2 3.2 6.8 2.4"/><path d="M4.3 10.2 L10.6 2.6"/><path d="M12.8 4.6 Q13.4 9.6 8.2 10.3"/></g></svg><svg class="r" style="left:72px;top:684px;" width="5" height="8" viewBox="0 0 5 8"><path d="M0.5 0.5 V7.5 L4.5 4 Z" fill="#a3acb5"/></svg><svg class="r" style="left:87px;top:683px;" width="10" height="10" viewBox="0 0 10 10"><path d="M0.5 1.5 H4 L5 2.8 H9.5 V9.5 H0.5 Z" fill="#a3acb5"/><path d="M0.5 3.8 H9.5" stroke="#fff" stroke-width="0.8"/></svg><div class="t" style="left:101px;top:679.60px;line-height:16.80px;font-size:12px;color:#a0a9b2;font-weight:normal;transform:scaleX(0.8791);">Hillshading</div><div class="t" style="left:158.5px;top:680.30px;line-height:15.40px;font-size:11px;color:#a0a9b2;font-weight:normal;font-style:italic;transform:scaleX(0.8854);">6 layers</div><svg class="r" style="left:234.5px;top:682px;" width="15" height="12" viewBox="0 0 15 12"><g fill="none" stroke="#a3acb5" stroke-width="1.8" stroke-linecap="round"><path d="M1.6 7.4 Q1.2 3.2 6.8 2.4"/><path d="M4.3 10.2 L10.6 2.6"/><path d="M12.8 4.6 Q13.4 9.6 8.2 10.3"/></g></svg><svg class="r" style="left:71px;top:741px;" width="7" height="6" viewBox="0 0 7 6"><path d="M0.5 0.5 H6.5 L3.5 4.5 Z" fill="#273d56"/></svg><svg class="r" style="left:87px;top:739px;" width="10" height="10" viewBox="0 0 10 10"><path d="M0.5 1.5 H4 L5 2.8 H9.5 V9.5 H0.5 Z" fill="#273d56"/><path d="M0.5 3.8 H9.5" stroke="#fff" stroke-width="0.8"/></svg><div class="t" style="left:101px;top:735.60px;line-height:16.80px;font-size:12px;color:#273d56;font-weight:normal;transform:scaleX(0.8426);">Extra</div><div class="t" style="left:130.6px;top:736.30px;line-height:15.40px;font-size:11px;color:#273d56;font-weight:normal;font-style:italic;transform:scaleX(0.8672);">8 layers</div><svg class="r" style="left:72px;top:968px;" width="5" height="8" viewBox="0 0 5 8"><path d="M0.5 0.5 V7.5 L4.5 4 Z" fill="#a3acb5"/></svg><svg class="r" style="left:87px;top:967px;" width="10" height="10" viewBox="0 0 10 10"><path d="M0.5 1.5 H4 L5 2.8 H9.5 V9.5 H0.5 Z" fill="#a3acb5"/><path d="M0.5 3.8 H9.5" stroke="#fff" stroke-width="0.8"/></svg><div class="t" style="left:101px;top:963.60px;line-height:16.80px;font-size:12px;color:#a0a9b2;font-weight:normal;transform:scaleX(0.8512);">Landcover</div><div class="t" style="left:155.3px;top:964.30px;line-height:15.40px;font-size:11px;color:#a0a9b2;font-weight:normal;font-style:italic;transform:scaleX(0.8854);">5 layers</div><svg class="r" style="left:234.5px;top:966px;" width="15" height="12" viewBox="0 0 15 12"><g fill="none" stroke="#a3acb5" stroke-width="1.8" stroke-linecap="round"><path d="M1.6 7.4 Q1.2 3.2 6.8 2.4"/><path d="M4.3 10.2 L10.6 2.6"/><path d="M12.8 4.6 Q13.4 9.6 8.2 10.3"/></g></svg><div class="r" style="left:260px;top:787px;width:6px;height:282px;background:#b3b3b3;border-radius:3px;"></div><div class="r" style="left:267px;top:159px;width:359px;height:913px;background:#f3f6fb;"></div><svg class="r" style="left:281.5px;top:171px;" width="13" height="10" viewBox="0 0 13 10"><path d="M3.5 1 H9.5 L12.5 9 H0.5 Z" fill="#1f3550" stroke="#1f3550" stroke-width="0.8" stroke-linejoin="round"/></svg><div class="t" style="left:303.5px;top:164.10px;line-height:22.40px;font-size:16px;color:#1f3550;font-weight:bold;transform:scaleX(0.9180);">national_park</div><div class="t" style="left:499px;top:168.80px;line-height:15.40px;font-size:11px;color:#273d56;font-weight:normal;transform:scaleX(0.8996);">Style</div><div class="t" style="left:533px;top:168.80px;line-height:15.40px;font-size:11px;color:#5b7ca0;font-weight:normal;transform:scaleX(0.9176);">Select data</div><svg class="r" style="left:600px;top:171px;" width="10" height="10" viewBox="0 0 10 10"><path d="M1 1 L9 9 M9 1 L1 9" stroke="#273d56" stroke-width="1.8"/></svg><div class="r" style="left:279px;top:194px;width:335px;height:1px;background:#c8d4e2;"></div><div class="r" style="left:499px;top:193px;width:22px;height:2px;background:#1f3550;"></div><div class="r" style="left:273px;top:207px;width:107px;height:49px;background:#c5d1e1;border-radius:4px;"></div><div class="t" style="left:279px;top:212.30px;line-height:15.40px;font-size:11px;color:#273d56;font-weight:bold;transform:scaleX(0.8949);">Color</div><div class="r" style="left:279px;top:233px;width:15px;height:15px;background:#232b1d;border-radius:4px;"></div><div class="t" style="left:279px;top:261.80px;line-height:15.40px;font-size:11px;color:#273d56;font-weight:bold;transform:scaleX(0.9948);">Pattern</div><div class="t m" style="left:279px;top:281.30px;line-height:15.40px;font-size:11px;color:#273d56;font-weight:normal;font-style:italic;transform:scaleX(0.8899);">None</div><div class="t" style="left:279px;top:310.80px;line-height:15.40px;font-size:11px;color:#273d56;font-weight:bold;transform:scaleX(0.9493);">Opacity</div><div class="t m" style="left:279px;top:330.30px;line-height:15.40px;font-size:11px;color:#273d56;font-weight:normal;transform:scaleX(0.8836);">0.7</div><svg class="r" style="left:336px;top:329px;" width="35" height="18" viewBox="0 0 35 18"><path d="M1 15.5 H8 L11 3.5 H34" stroke="#5a7896" stroke-width="1.3" fill="none"/><circle cx="8" cy="15.5" r="2" fill="#5a7896"/><path d="M8.5 1 H13 L10.8 4 Z" fill="#273d56"/></svg><div class="t" style="left:279px;top:359.60px;line-height:15.40px;font-size:11px;color:#273d56;font-weight:bold;transform:scaleX(0.9488);">Antialias</div><div class="t m" style="left:279px;top:379.30px;line-height:15.40px;font-size:11px;color:#273d56;font-weight:normal;transform:scaleX(0.8899);">True</div><div class="t" style="left:279px;top:408.60px;line-height:15.40px;font-size:11px;color:#273d56;font-weight:bold;transform:scaleX(0.9360);">1px stroke</div><div class="r" style="left:279px;top:429.3px;width:15px;height:15px;background:#000;border-radius:4px;"></div><div class="t" style="left:279px;top:457.60px;line-height:15.40px;font-size:11px;color:#273d56;font-weight:bold;transform:scaleX(0.9586);">Translate</div><div class="t m" style="left:279px;top:477.90px;line-height:15.40px;font-size:11px;color:#273d56;font-weight:normal;transform:scaleX(0.9202);">0, 0</div><div class="t" style="left:279px;top:506.30px;line-height:15.40px;font-size:11px;color:#a3abb3;font-weight:bold;transform:scaleX(0.9542);">Translate anchor</div><svg class="r" style="left:281.5px;top:527.5px;" width="13" height="13" viewBox="0 0 13 13"><circle cx="6.5" cy="6.5" r="5.5" fill="none" stroke="#9ea6ae" stroke-width="1.6"/><path d="M2 4 Q5 3 6 6 Q7 9 10 9.5 L11 7 Q11.5 11 6.5 12 Q1.5 11 1.2 6.5 Z" fill="#9ea6ae"/></svg><div class="r" style="left:386px;top:207px;width:1px;height:853px;background:#c8d4e2;"></div><div class="t" style="left:398.3px;top:206.70px;line-height:15.40px;font-size:11px;color:#273d56;font-weight:bold;transform:scaleX(0.9098);">Fill color</div><div class="r" style="left:398px;top:228px;width:120px;height:108px;background:linear-gradient(to bottom,#fff 0%,rgba(255,255,255,0) 50%,rgba(0,0,0,0) 50%,#000 100%),linear-gradient(to right,#808080,#66ff00);"></div><div class="r" style="left:398px;top:336px;width:120px;height:12px;background:linear-gradient(to right,#f00 0%,#ff0 17%,#0f0 33%,#0ff 50%,#00f 67%,#f0f 83%,#f00 100%);"></div><div class="r" style="left:398px;top:348px;width:120px;height:12px;background:linear-gradient(to right,#fafafa,#9a9a9a 50%,#232b1d);"></div><div class="r" style="left:429px;top:335.5px;width:5.5px;height:13px;background:#d8e7c2;border:1px solid #555;box-sizing:border-box;"></div><div class="r" style="left:511px;top:349px;width:4.5px;height:11px;background:#ccc;border:1px solid #666;box-sizing:border-box;"></div><div class="r" style="left:417.3px;top:316.5px;width:9px;height:9px;background:#2a2d28;border-radius:50%;border:1px solid #7a7a7a;box-sizing:border-box;"></div><div class="r" style="left:398px;top:369px;width:120px;height:24px;background:#232b1d;border-radius:4px;"></div><div class="r" style="left:458px;top:369px;width:1px;height:24px;background:#e6ebf0;"></div><div class="r" style="left:530px;top:234px;width:42px;height:18px;background:#5a7896;border-radius:9px;"></div><div class="t" style="left:541.7px;top:235.30px;line-height:15.40px;font-size:11px;color:#fff;font-weight:bold;transform:scaleX(0.8409);">HSL</div><div class="t" style="left:582.8px;top:235.30px;line-height:15.40px;font-size:11px;color:#5b7ca0;font-weight:bold;transform:scaleX(0.8264);">RGB</div><div class="r" style="left:534.7px;top:266.9px;width:13px;height:13px;background:#fff;border-radius:50%;border:1px solid #777;box-sizing:border-box;"></div><div class="r" style="left:534.7px;top:290.7px;width:13px;height:13px;background:#fff;border-radius:50%;border:1px solid #777;box-sizing:border-box;"></div><div class="r" style="left:534.7px;top:315.0px;width:13px;height:13px;background:#fff;border-radius:50%;border:1px solid #777;box-sizing:border-box;"></div><div class="r" style="left:534.7px;top:266.9px;width:13px;height:13px;background:#fff;border-radius:50%;border:1.5px solid #1a73e8;box-sizing:border-box;"></div><div class="r" style="left:537.7px;top:269.9px;width:7px;height:7px;background:#1a73e8;border-radius:50%;"></div><div class="r" style="left:554.4px;top:261.4px;width:59px;height:20.100000000000023px;background:#fff;border:1px solid #d3dce6;border-radius:3px;box-sizing:border-box;"></div><div class="t m" style="left:560px;top:264.45px;line-height:14.00px;font-size:10px;color:#c2cad2;font-weight:normal;">h</div><div class="t m" style="left:572.4px;top:263.75px;line-height:15.40px;font-size:11px;color:#273d56;font-weight:normal;transform:scaleX(0.9467);">94</div><div class="r" style="left:554.4px;top:285.7px;width:59px;height:19.600000000000023px;background:#fff;border:1px solid #d3dce6;border-radius:3px;box-sizing:border-box;"></div><div class="t m" style="left:560px;top:288.50px;line-height:14.00px;font-size:10px;color:#c2cad2;font-weight:normal;">s</div><div class="t m" style="left:572.4px;top:287.80px;line-height:15.40px;font-size:11px;color:#273d56;font-weight:normal;transform:scaleX(0.9467);">20</div><div class="r" style="left:554.4px;top:310px;width:59px;height:19px;background:#fff;border:1px solid #d3dce6;border-radius:3px;box-sizing:border-box;"></div><div class="t m" style="left:560px;top:312.50px;line-height:14.00px;font-size:10px;color:#c2cad2;font-weight:normal;">l</div><div class="t m" style="left:572.4px;top:311.80px;line-height:15.40px;font-size:11px;color:#273d56;font-weight:normal;transform:scaleX(0.9467);">14</div><div class="r" style="left:530px;top:339.5px;width:83.4px;height:20.2px;background:#fff;border:1px solid #d3dce6;border-radius:3px;box-sizing:border-box;"></div><div class="t" style="left:536.6px;top:342.60px;line-height:14.00px;font-size:10px;color:#c2cad2;font-weight:normal;">α</div><div class="t m" style="left:548px;top:341.90px;line-height:15.40px;font-size:11px;color:#273d56;font-weight:normal;transform:scaleX(0.9089);">100</div><div class="r" style="left:530px;top:371.7px;width:83.4px;height:19.7px;background:#fff;border:1px solid #d3dce6;border-radius:3px;box-sizing:border-box;"></div><div class="t m" style="left:536.6px;top:374.50px;line-height:14.00px;font-size:10px;color:#c2cad2;font-weight:normal;">#</div><div class="t m" style="left:548px;top:373.80px;line-height:15.40px;font-size:11px;color:#273d56;font-weight:normal;transform:scaleX(0.8963);">232b1d</div><div class="r" style="left:398px;top:405px;width:216px;height:1px;background:#c8d4e2;"></div><div class="t" style="left:422px;top:425.80px;line-height:15.40px;font-size:11px;color:#5b7ca0;font-weight:bold;transform:scaleX(0.9213);">Style across zoom range</div><div class="t" style="left:422px;top:455.50px;line-height:15.40px;font-size:11px;color:#5b7ca0;font-weight:bold;transform:scaleX(0.9296);">Style across data range</div><div class="t" style="left:422px;top:486.10px;line-height:15.40px;font-size:11px;color:#5b7ca0;font-weight:bold;transform:scaleX(0.9538);">Style with data conditions</div><div class="t" style="left:422px;top:516.10px;line-height:15.40px;font-size:11px;color:#5b7ca0;font-weight:bold;transform:scaleX(0.9499);">Use a formula</div><svg class="r" style="left:400px;top:426px;" width="14" height="14" viewBox="0 0 14 14"><path d="M3 1 Q1 1 1 3 V11 Q1 13 3 13" stroke="#aab9c9" stroke-width="1.8" fill="none"/><circle cx="7.3" cy="6.3" r="3.3" fill="none" stroke="#5b7ca0" stroke-width="1.4"/><path d="M9.6 8.6 L12.5 11.5" stroke="#5b7ca0" stroke-width="1.6"/></svg><svg class="r" style="left:400px;top:456px;" width="14" height="14" viewBox="0 0 14 14"><path d="M3 1 Q1 1 1 3 V11 Q1 13 3 13" stroke="#aab9c9" stroke-width="1.8" fill="none"/><ellipse cx="8" cy="4" rx="3.5" ry="1.7" fill="#5b7ca0"/><path d="M4.5 6 Q8 8 11.5 6 V7.5 Q8 9.5 4.5 7.5 Z M4.5 9 Q8 11 11.5 9 V10.5 Q8 12.5 4.5 10.5 Z" fill="#5b7ca0"/></svg><svg class="r" style="left:400px;top:486px;" width="14" height="14" viewBox="0 0 14 14"><path d="M3 1.5 V7 H8" stroke="#5b7ca0" stroke-width="1.6" fill="none"/><path d="M6.5 4.5 L9 7 L6.5 9.5" stroke="#5b7ca0" stroke-width="1.6" fill="none"/><circle cx="12" cy="2.5" r="1.7" fill="#aab9c9"/><circle cx="12" cy="7" r="1.7" fill="#aab9c9"/><circle cx="12" cy="11.5" r="1.7" fill="#aab9c9"/></svg><svg class="r" style="left:400px;top:516px;" width="14" height="14" viewBox="0 0 14 14"><path d="M1.5 12 L4 12 L5.5 4 Q6 2.5 7.5 2.5 H12" stroke="#5b7ca0" stroke-width="1.8" fill="none"/><circle cx="9" cy="8.5" r="1.8" fill="#aab9c9"/></svg><div class="r" style="left:398px;top:550px;width:216px;height:1px;background:#c8d4e2;"></div><div class="t" style="left:419.3px;top:567.30px;line-height:15.40px;font-size:11px;color:#5b7ca0;font-weight:bold;transform:scaleX(0.9387);">Clear value</div><div class="t" style="left:419.3px;top:597.50px;line-height:15.40px;font-size:11px;color:#5b7ca0;font-weight:bold;transform:scaleX(0.9355);">Apply existing value</div><svg class="r" style="left:401px;top:567px;" width="14" height="16" viewBox="0 0 14 16"><path d="M4.5 2.5 L2 5 L4.5 7.5" stroke="#5b7ca0" stroke-width="1.6" fill="none"/><path d="M2.5 5 H7.5 Q11 5 11 8.5 Q11 12 7.5 12 H5" stroke="#5b7ca0" stroke-width="1.8" fill="none"/></svg><svg class="r" style="left:398px;top:597px;" width="18" height="16" viewBox="0 0 18 16"><rect x="1" y="5" width="8.5" height="10" fill="#5b7ca0"/><path d="M3 8.5 H7.5 M3 11 H6" stroke="#fff" stroke-width="1"/><path d="M10 3 Q13.5 3 13.5 6.5" stroke="#5b7ca0" stroke-width="1.6" fill="none"/><path d="M11.5 6 L13.5 8.5 L15.5 6 Z" fill="#5b7ca0"/><circle cx="13.5" cy="12.5" r="1.7" fill="#aab9c9"/></svg><div class="r" style="left:398px;top:1023px;width:216px;height:1px;background:#c8d4e2;"></div><svg class="r" style="left:404px;top:1044px;" width="6" height="8" viewBox="0 0 6 8"><path d="M0.5 0.5 V7.5 L5 4 Z" fill="#5b7ca0"/></svg><div class="t" style="left:416px;top:1040.60px;line-height:15.40px;font-size:11px;color:#5b7ca0;font-weight:normal;transform:scaleX(0.9399);">Details</div><div class="r" style="left:530px;top:1036px;width:42px;height:24px;background:#5a7896;border-radius:12px;"></div><svg class="r" style="left:545px;top:1041px;" width="12" height="14" viewBox="0 0 12 14"><path d="M3 1 L3 12 L5.5 9.5 L7.5 13 L9 12.3 L7.2 8.8 L10.5 8.5 Z" fill="#fff"/></svg><svg class="r" style="left:584px;top:1041px;" width="18" height="14" viewBox="0 0 18 14"><path d="M5 3 L1.5 7 L5 11 M13 3 L16.5 7 L13 11" stroke="#4e6b87" stroke-width="1.8" fill="none"/><path d="M10.5 1.5 L7.5 12.5" stroke="#4e6b87" stroke-width="1.8"/></svg><div class="r" style="left:2013px;top:171px;width:30px;height:30px;background:#fff;border-radius:4px;"></div><svg class="r" style="left:2020px;top:178px;" width="16" height="16" viewBox="0 0 16 16"><circle cx="6.5" cy="6.5" r="4.8" fill="none" stroke="#1f3550" stroke-width="1.8"/><path d="M10 10 L14 14" stroke="#1f3550" stroke-width="2" stroke-linecap="round"/></svg><div class="r" style="left:2013px;top:213px;width:30px;height:90px;background:#fff;border-radius:4px;"></div><div class="r" style="left:2013px;top:243px;width:30px;height:1px;background:#e0e0e0;"></div><div class="r" style="left:2013px;top:273px;width:30px;height:1px;background:#e0e0e0;"></div><svg class="r" style="left:2022px;top:222px;" width="12" height="12" viewBox="0 0 12 12"><path d="M6 1 V11 M1 6 H11" stroke="#1f3550" stroke-width="2"/></svg><svg class="r" style="left:2022px;top:252px;" width="12" height="12" viewBox="0 0 12 12"><path d="M1 6 H11" stroke="#1f3550" stroke-width="2"/></svg><svg class="r" style="left:2022px;top:283px;" width="12" height="12" viewBox="0 0 12 12"><path d="M6 0.5 L11 11 L6 8.5 L1 11 Z" fill="#1f3550"/></svg><div class="r" style="left:55px;top:37px;width:2000px;height:1035px;background:transparent;box-sizing:border-box;border:1px solid rgba(255,255,255,0.19);border-radius:11px;"></div></body></html>
